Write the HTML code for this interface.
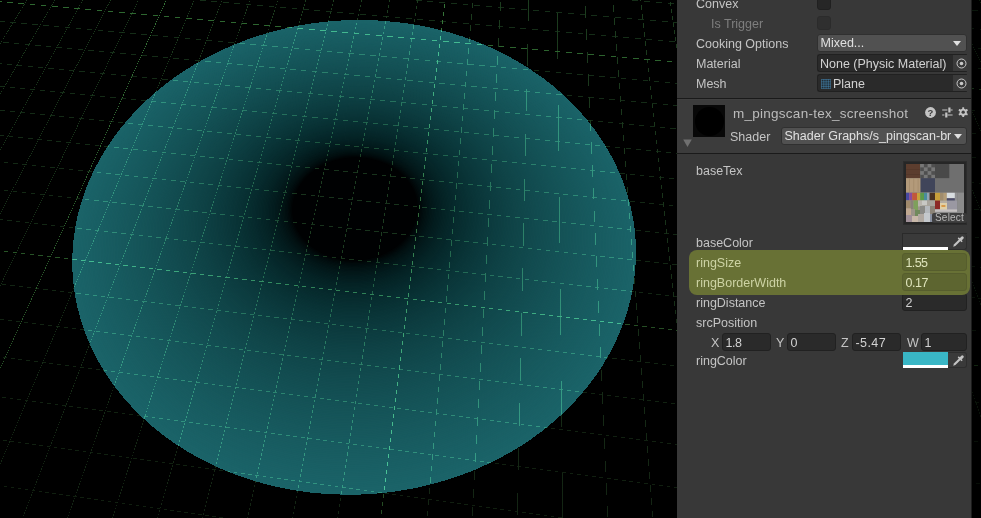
<!DOCTYPE html>
<html><head><meta charset="utf-8"><title>Inspector</title>
<style>
html,body{margin:0;padding:0;background:#000;}
body{width:981px;height:518px;overflow:hidden;position:relative;font-family:"Liberation Sans",sans-serif;font-size:12.5px;color:#c4c4c4;}
#scene{position:absolute;left:0;top:0;width:981px;height:518px;}
#panel{transform:translateZ(0);will-change:transform;position:absolute;left:677px;top:0;width:294px;height:518px;background:#383838;overflow:hidden;box-shadow:1px 0 0 #1d1d1d;}
.hdrbg{position:absolute;left:0;top:99px;width:295px;height:54px;background:#3c3c3c;}
.sep{position:absolute;left:0;width:295px;height:1px;background:#1a1a1a;}
.lbl{position:absolute;left:19px;height:17px;line-height:17px;white-space:nowrap;color:#c4c4c4;z-index:2;}
.lbl.dim{color:#7e7e7e;}
.lbl.hlt{color:#cdd3a4;}
.chk{position:absolute;left:140px;width:12px;height:12px;background:#262626;border:1px solid #202020;border-radius:3px;}
.chk.dis{background:#2f2f2f;border-color:#2b2b2b;}
.dd{position:absolute;box-sizing:border-box;background:#515151;border:1px solid #303030;border-radius:3px;color:#e0e0e0;}
.dd span{position:absolute;left:2.5px;top:0px;height:16px;line-height:16px;white-space:nowrap;}
.arr{position:absolute;right:5px;top:6px;width:0;height:0;border-left:4px solid transparent;border-right:4px solid transparent;border-top:5px solid #e0e0e0;}
.obj{position:absolute;left:140px;width:150px;height:18px;box-sizing:border-box;background:#2a2a2a;border:1px solid #212121;border-right:none;border-radius:3px 1px 1px 3px;color:#d2d2d2;overflow:hidden;}
.obj span{position:absolute;left:2px;top:1px;height:16px;line-height:16px;white-space:nowrap;}
.obj .mesh{position:absolute;left:2.5px;top:3.8px;}
.obj .pick{position:absolute;right:0;top:0;width:14px;height:16px;background:#3a3a3a;}
.obj .pick svg{position:absolute;left:2.5px;top:2.5px;}
.thumb{position:absolute;left:16px;top:105px;width:32px;height:32px;background:#080808;}
.thumb div{position:absolute;left:1.5px;top:1.5px;width:29px;height:29px;border-radius:50%;background:#000;}
.fold{position:absolute;left:6.3px;top:139px;}
.title{position:absolute;left:56px;top:105px;height:18px;line-height:18px;font-size:13.5px;letter-spacing:0.26px;color:#bcbcbc;white-space:nowrap;}
.ico{position:absolute;}
.tex{position:absolute;left:226px;top:161px;width:64px;height:64px;box-sizing:border-box;background:#262626;border:1px solid #2c2c2c;}
.tex>svg{position:absolute;left:2px;top:2px;}
.sel{position:absolute;right:-1px;bottom:1px;width:35px;height:10px;line-height:10px;font-size:10px;letter-spacing:0.2px;text-align:center;background:rgba(58,58,58,0.92);color:#b8b8b8;border-radius:2px;}
.col{position:absolute;left:225px;width:65px;height:16px;}
.col .sw{position:absolute;left:1px;top:0;width:45px;height:13px;}
.col .al{position:absolute;left:1px;top:13px;width:45px;height:3px;background:#fff;}
.col .eye{position:absolute;left:46px;top:0;width:19px;height:16px;box-sizing:border-box;background:#3a3a3a;border:1px solid #2d2d2d;border-left:none;border-radius:0 3px 3px 0;}
.col .eye svg{position:absolute;left:5px;top:2px;}
.col.bc{border-top:1px solid #2a2a2a;border-left:1px solid #2a2a2a;width:64px}
.col.bc .sw,.col.bc .al{left:0}
.col.bc .eye{left:45px;border-top:none}
.hl{position:absolute;left:12px;top:250px;width:281px;height:45px;background:#687135;border-radius:8px;z-index:1;}
.fld{position:absolute;height:18px;box-sizing:border-box;background:#2a2a2a;border:1px solid #212121;border-radius:3px;color:#d2d2d2;z-index:2;}
.fld span{position:absolute;left:2.5px;top:1.5px;height:15px;line-height:15px;white-space:nowrap;}
.fld.hlf{background:#5d6530;border-color:#565d2d;color:#dfe4bc;}

</style></head>
<body>
<svg id="scene" width="981" height="518" viewBox="0 0 981 518">
<rect width="981" height="518" fill="#000"/>
<defs>
<linearGradient id="g_amin" gradientUnits="userSpaceOnUse" x1="0" y1="0" x2="0" y2="518"><stop offset="0" stop-color="#152e18"/><stop offset="1" stop-color="#101e0f"/></linearGradient>
<linearGradient id="g_bmin" gradientUnits="userSpaceOnUse" x1="0" y1="0" x2="0" y2="518"><stop offset="0" stop-color="#1c3c1e"/><stop offset="1" stop-color="#132413"/></linearGradient>
<linearGradient id="g_amaj" gradientUnits="userSpaceOnUse" x1="0" y1="0" x2="0" y2="518"><stop offset="0" stop-color="#2e6830"/><stop offset="1" stop-color="#203e1c"/></linearGradient>
<linearGradient id="g_bmaj" gradientUnits="userSpaceOnUse" x1="0" y1="0" x2="0" y2="518"><stop offset="0" stop-color="#367438"/><stop offset="1" stop-color="#244a22"/></linearGradient>
<path id="pa0" transform="translate(0 .5)" d="M849 0h6M861 1h6M873 2h7M886 3h6M898 4h6M910 5h6M923 6h6M935 7h6M947 8h6M959 9h6M972 10h6M632 0h6M644 1h6M656 2h6M668 3h6M680 4h6M692 5h6M704 6h6M716 7h6M728 8h6M740 9h6M752 10h6M764 11h6M776 12h6M788 13h6M800 14h6M812 15h6M824 16h6M836 17h6M848 18h6M860 19h6M872 20h6M884 21h6M896 22h6M908 23h6M920 24h6M932 25h6M944 26h6M956 27h6M968 28h6M980 29h1M416 0h6M427 1h6M439 2h6M451 3h6M463 4h5M474 5h6M486 6h6M498 7h6M509 8h6M521 9h6M533 10h6M545 11h5M556 12h6M568 13h6M580 14h6M591 15h6M603 16h6M615 17h6M627 18h5M638 19h6M650 20h6M662 21h6M673 22h6M685 23h6M697 24h6M709 25h5M720 26h6M732 27h6M744 28h6M755 29h6M767 30h6M779 31h6M791 32h5M802 33h6M814 34h6M826 35h6M837 36h6M849 37h6M861 38h6M873 39h5M884 40h6M896 41h6M908 42h6M919 43h6M931 44h6M943 45h6M955 46h5M966 47h6M978 48h3M200 0h6M211 1h6M223 2h6M234 3h6M246 4h5M257 5h6M269 6h5M280 7h6M292 8h5M303 9h6M314 10h6M326 11h6M337 12h6M349 13h5M360 14h6M372 15h5M383 16h6M395 17h5M406 18h6M417 19h6M429 20h6M440 21h6M452 22h5M463 23h6M475 24h5M486 25h6M498 26h5M509 27h6M520 28h6M532 29h6M543 30h6M555 31h5M566 32h6M578 33h5M589 34h6M601 35h5M612 36h6M623 37h6M635 38h6M646 39h6M658 40h5M669 41h6M681 42h5M692 43h6M704 44h5M715 45h6M726 46h6M738 47h6M749 48h6M761 49h5M772 50h6M784 51h5M795 52h6M807 53h5M818 54h6M829 55h6M841 56h6M852 57h6M864 58h5M875 59h6M887 60h5M898 61h6M910 62h5M921 63h6M932 64h6M944 65h6M955 66h6M967 67h5M978 68h3M0 21h5M10 22h6M21 23h6M32 24h6M43 25h6M54 26h5M65 27h5M76 28h5M87 29h5M98 30h5M108 31h6M119 32h6M130 33h6M141 34h6M152 35h6M163 36h5M174 37h5M185 38h5M196 39h5M207 40h5M218 41h5M228 42h6M239 43h6M250 44h6M261 45h6M272 46h6M283 47h5M294 48h5M305 49h5M316 50h5M327 51h5M337 52h6M348 53h6M359 54h6M370 55h6M381 56h6M392 57h5M403 58h5M414 59h5M425 60h5M436 61h5M447 62h5M457 63h6M468 64h6M479 65h6M490 66h6M501 67h5M512 68h5M523 69h5M534 70h5M545 71h5M556 72h5M566 73h6M577 74h6M588 75h6M599 76h6M610 77h6M621 78h5M632 79h5M643 80h5M654 81h5M665 82h5M675 83h6M686 84h6M697 85h6M708 86h6M719 87h6M730 88h5M741 89h5M752 90h5M763 91h5M774 92h5M785 93h5M795 94h6M806 95h6M817 96h6M828 97h6M839 98h6M850 99h5M861 100h5M872 101h5M883 102h5M894 103h5M904 104h6M915 105h6M926 106h6M937 107h6M948 108h6M959 109h5M970 110h5M3 42h6M14 43h5M25 44h5M35 45h6M46 46h5M57 47h5M67 48h5M78 49h5M88 50h6M99 51h5M110 52h5M120 53h6M131 54h5M142 55h5M152 56h6M163 57h5M173 58h6M184 59h5M195 60h5M205 61h6M216 62h5M227 63h5M237 64h6M248 65h5M259 66h5M269 67h6M280 68h5M290 69h6M301 70h5M312 71h5M322 72h6M333 73h5M344 74h5M354 75h6M365 76h5M376 77h5M386 78h5M397 79h5M407 80h6M418 81h5M429 82h5M439 83h6M450 84h5M461 85h5M471 86h6M482 87h5M493 88h5M503 89h5M514 90h5M524 91h6M535 92h5M546 93h5M556 94h6M567 95h5M578 96h5M588 97h6M599 98h5M609 99h6M620 100h5M631 101h5M641 102h6M652 103h5M663 104h5M673 105h6M684 106h5M695 107h5M705 108h6M716 109h5M726 110h6M737 111h5M748 112h5M758 113h6M769 114h5M780 115h5M790 116h6M801 117h5M812 118h5M822 119h6M833 120h5M843 121h6M854 122h5M865 123h5M875 124h6M886 125h5M897 126h5M907 127h6M918 128h5M929 129h5M939 130h5M950 131h5M960 132h6M971 133h5M0 63h2M7 64h5M17 65h5M28 66h5M38 67h5M48 68h6M59 69h5M69 70h5M79 71h6M90 72h5M100 73h5M111 74h5M121 75h5M131 76h6M142 77h5M152 78h5M162 79h6M173 80h5M183 81h5M194 82h5M204 83h5M214 84h5M225 85h5M235 86h5M245 87h6M256 88h5M266 89h5M276 90h6M287 91h5M297 92h5M308 93h5M318 94h5M328 95h5M339 96h5M349 97h5M359 98h6M370 99h5M380 100h5M390 101h6M401 102h5M411 103h5M422 104h5M432 105h5M442 106h5M453 107h5M463 108h5M473 109h6M484 110h5M494 111h5M505 112h5M515 113h5M525 114h5M536 115h5M546 116h5M556 117h6M567 118h5M577 119h5M587 120h6M598 121h5M608 122h5M619 123h5M629 124h5M639 125h5M650 126h5M660 127h5M670 128h6M681 129h5M691 130h5M701 131h6M712 132h5M722 133h5M733 134h5M743 135h5M753 136h5M764 137h5M774 138h5M784 139h6M795 140h5M805 141h5M815 142h6M826 143h5M836 144h5M847 145h5M857 146h5M867 147h6M878 148h5M888 149h5M898 150h6M909 151h5M919 152h5M930 153h5M940 154h5M950 155h5M961 156h5M971 157h5M0 86h4M10 87h5M20 88h5M30 89h5M40 90h5M50 91h5M60 92h5M70 93h5M80 94h5M90 95h5M100 96h5M110 97h6M121 98h5M131 99h5M141 100h5M151 101h5M161 102h5M171 103h5M181 104h5M191 105h5M201 106h5M211 107h6M222 108h5M232 109h5M242 110h5M252 111h5M262 112h5M272 113h5M282 114h5M292 115h5M302 116h5M312 117h6M323 118h5M333 119h5M343 120h5M353 121h5M363 122h5M373 123h5M383 124h5M393 125h5M403 126h5M413 127h5M424 128h5M434 129h5M444 130h5M454 131h5M464 132h5M474 133h5M484 134h5M494 135h5M504 136h5M514 137h5M525 138h5M535 139h5M545 140h5M555 141h5M565 142h5M575 143h5M585 144h5M595 145h5M605 146h5M615 147h5M626 148h5M636 149h5M646 150h5M656 151h5M666 152h5M676 153h5M686 154h5M696 155h5M706 156h5M716 157h5M727 158h5M737 159h5M747 160h5M757 161h5M767 162h5M777 163h5M787 164h5M797 165h5M807 166h5M817 167h5M827 168h6M838 169h5M848 170h5M858 171h5M868 172h5M878 173h5M888 174h5M898 175h5M908 176h5M918 177h5M928 178h6M939 179h5M949 180h5M959 181h5M969 182h5M979 183h2M0 110h5M10 111h5M20 112h5M30 113h5M40 114h5M50 115h5M59 116h5M69 117h5M79 118h5M89 119h5M99 120h5M109 121h5M118 122h5M128 123h5M138 124h5M148 125h5M158 126h5M168 127h5M177 128h5M187 129h5M197 130h5M207 131h5M217 132h5M227 133h5M236 134h5M246 135h5M256 136h5M266 137h5M276 138h5M286 139h5M295 140h5M305 141h5M315 142h5M325 143h5M335 144h5M345 145h5M354 146h5M364 147h5M374 148h5M384 149h5M394 150h5M404 151h4M413 152h5M423 153h5M433 154h5M443 155h5M453 156h5M463 157h4M472 158h5M482 159h5M492 160h5M502 161h5M512 162h5M522 163h4M531 164h5M541 165h5M551 166h5M561 167h5M571 168h5M581 169h4M590 170h5M600 171h5M610 172h5M620 173h5M630 174h5M640 175h4M649 176h5M659 177h5M669 178h5M679 179h5M689 180h5M699 181h4M708 182h5M718 183h5M728 184h5M738 185h5M748 186h5M758 187h4M767 188h5M777 189h5M787 190h5M797 191h5M807 192h5M817 193h4M826 194h5M836 195h5M846 196h5M856 197h5M866 198h5M875 199h5M885 200h5M895 201h5M905 202h5M915 203h5M925 204h5M934 205h5M944 206h5M954 207h5M964 208h5M974 209h5M0 135h4M9 136h4M18 137h5M28 138h5M37 139h5M47 140h5M56 141h5M66 142h5M76 143h4M85 144h5M95 145h4M104 146h5M114 147h5M123 148h5M133 149h5M143 150h4M152 151h5M162 152h4M171 153h5M181 154h5M190 155h5M200 156h5M209 157h5M219 158h5M229 159h4M238 160h5M248 161h5M257 162h5M267 163h5M276 164h5M286 165h5M296 166h4M305 167h5M315 168h4M324 169h5M334 170h5M343 171h5M353 172h5M363 173h4M372 174h5M382 175h4M391 176h5M401 177h5M410 178h5M420 179h5M429 180h5M439 181h5M449 182h4M458 183h5M468 184h5M477 185h5M487 186h5M496 187h5M506 188h5M516 189h4M525 190h5M535 191h4M544 192h5M554 193h5M563 194h5M573 195h5M583 196h4M592 197h5M602 198h4M611 199h5M621 200h5M630 201h5M640 202h5M649 203h5M659 204h5M669 205h4M678 206h5M688 207h5M697 208h5M707 209h5M716 210h5M726 211h5M736 212h4M745 213h5M755 214h4M764 215h5M774 216h5M783 217h5M793 218h5M803 219h4M812 220h5M822 221h4M831 222h5M841 223h5M850 224h5M860 225h5M869 226h5M879 227h5M889 228h4M898 229h5M908 230h5M917 231h5M927 232h5M936 233h5M946 234h5M956 235h4M965 236h5M975 237h4M4 162h4M13 163h5M22 164h5M32 165h4M41 166h4M50 167h5M59 168h5M69 169h4M78 170h5M87 171h5M97 172h4M106 173h5M115 174h5M125 175h4M134 176h4M143 177h5M152 178h5M162 179h4M171 180h5M180 181h5M190 182h4M199 183h5M208 184h5M218 185h4M227 186h4M236 187h5M245 188h5M255 189h4M264 190h5M273 191h5M283 192h4M292 193h5M301 194h5M311 195h4M320 196h4M329 197h5M338 198h5M348 199h4M357 200h5M366 201h5M376 202h4M385 203h5M394 204h5M404 205h4M413 206h4M422 207h5M431 208h5M441 209h4M450 210h5M459 211h5M469 212h4M478 213h5M487 214h5M497 215h4M506 216h4M515 217h5M524 218h5M534 219h4M543 220h5M552 221h5M562 222h4M571 223h5M580 224h5M590 225h4M599 226h4M608 227h5M617 228h5M627 229h4M636 230h5M645 231h5M655 232h4M664 233h5M673 234h5M683 235h4M692 236h4M701 237h5M710 238h5M720 239h4M729 240h5M738 241h5M748 242h4M757 243h5M766 244h5M776 245h4M785 246h4M794 247h5M803 248h5M813 249h4M822 250h5M831 251h5M841 252h4M850 253h5M859 254h5M869 255h4M878 256h4M887 257h5M896 258h5M906 259h4M915 260h5M924 261h5M934 262h4M943 263h5M952 264h5M962 265h4M971 266h4M980 267h1M4 190h4M13 191h4M22 192h4M31 193h4M40 194h4M49 195h4M58 196h4M67 197h4M76 198h4M85 199h4M94 200h5M103 201h5M112 202h5M121 203h5M130 204h5M139 205h5M148 206h5M157 207h5M166 208h5M175 209h5M184 210h5M193 211h5M202 212h5M211 213h5M220 214h5M230 215h4M239 216h4M248 217h4M257 218h4M266 219h4M275 220h4M284 221h4M293 222h4M302 223h4M311 224h4M320 225h4M329 226h4M338 227h4M347 228h5M356 229h5M365 230h5M374 231h5M383 232h5M392 233h5M401 234h5M410 235h5M419 236h5M428 237h5M437 238h5M446 239h5M455 240h5M464 241h5M473 242h5M483 243h4M492 244h4M501 245h4M510 246h4M519 247h4M528 248h4M537 249h4M546 250h4M555 251h4M564 252h4M573 253h4M582 254h4M591 255h4M600 256h5M609 257h5M618 258h5M627 259h5M636 260h5M645 261h5M654 262h5M663 263h5M672 264h5M681 265h5M690 266h5M699 267h5M708 268h5M717 269h5M726 270h5M736 271h4M745 272h4M754 273h4M763 274h4M772 275h4M781 276h4M790 277h4M799 278h4M808 279h4M817 280h4M826 281h4M835 282h4M844 283h4M853 284h5M862 285h5M871 286h5M880 287h5M889 288h5M898 289h5M907 290h5M916 291h5M925 292h5M934 293h5M943 294h5M952 295h5M961 296h5M970 297h5M979 298h2M0 219h3M7 220h5M16 221h4M25 222h4M34 223h4M42 224h5M51 225h4M60 226h4M69 227h4M77 228h5M86 229h5M95 230h4M104 231h4M112 232h5M121 233h5M130 234h4M139 235h4M148 236h4M156 237h5M165 238h4M174 239h4M183 240h4M191 241h5M200 242h5M209 243h4M218 244h4M226 245h5M235 246h5M244 247h4M253 248h4M262 249h4M270 250h5M279 251h5M288 252h4M297 253h4M305 254h5M314 255h5M323 256h4M332 257h4M341 258h4M349 259h5M358 260h4M367 261h4M376 262h4M384 263h5M393 264h5M402 265h4M411 266h4M419 267h5M428 268h5M437 269h4M446 270h4M455 271h4M463 272h5M472 273h4M481 274h4M490 275h4M498 276h5M507 277h5M516 278h4M525 279h4M534 280h4M542 281h5M551 282h4M560 283h4M569 284h4M577 285h5M586 286h5M595 287h4M604 288h4M612 289h5M621 290h5M630 291h4M639 292h4M648 293h4M656 294h5M665 295h4M674 296h4M683 297h4M691 298h5M700 299h5M709 300h4M718 301h4M726 302h5M735 303h5M744 304h4M753 305h4M762 306h4M770 307h5M779 308h5M788 309h4M797 310h4M805 311h5M814 312h5M823 313h4M832 314h4M841 315h4M849 316h5M858 317h4M867 318h4M876 319h4M884 320h5M893 321h5M902 322h4M911 323h4M919 324h5M928 325h5M937 326h4M946 327h4M955 328h4M963 329h5M972 330h4M2 284h4M10 285h5M19 286h4M27 287h4M35 288h4M43 289h5M52 290h4M60 291h4M68 292h4M76 293h5M85 294h4M93 295h4M101 296h4M109 297h5M118 298h4M126 299h4M134 300h4M142 301h5M151 302h4M159 303h4M167 304h4M175 305h5M184 306h4M192 307h4M200 308h4M208 309h5M217 310h4M225 311h4M233 312h4M241 313h5M250 314h4M258 315h4M266 316h4M274 317h5M283 318h4M291 319h4M299 320h4M307 321h4M316 322h4M324 323h4M332 324h4M340 325h4M349 326h4M357 327h4M365 328h4M373 329h4M382 330h4M390 331h4M398 332h4M406 333h4M415 334h4M423 335h4M431 336h4M439 337h4M448 338h4M456 339h4M464 340h4M472 341h4M481 342h4M489 343h4M497 344h4M505 345h4M514 346h4M522 347h4M530 348h4M538 349h4M547 350h4M555 351h4M563 352h4M571 353h4M580 354h4M588 355h4M596 356h4M604 357h4M612 358h5M621 359h4M629 360h4M637 361h4M645 362h5M654 363h4M662 364h4M670 365h4M678 366h5M687 367h4M695 368h4M703 369h4M711 370h5M720 371h4M728 372h4M736 373h4M744 374h5M753 375h4M761 376h4M769 377h4M777 378h5M786 379h4M794 380h4M802 381h4M810 382h5M819 383h4M827 384h4M835 385h4M843 386h5M852 387h4M860 388h4M868 389h4M876 390h5M885 391h4M893 392h4M901 393h4M909 394h4M918 395h4M926 396h4M934 397h4M942 398h4M951 399h4M959 400h4M967 401h4M975 402h4M0 319h4M8 320h4M16 321h4M24 322h4M32 323h4M40 324h4M48 325h4M56 326h4M64 327h4M72 328h4M80 329h4M88 330h4M96 331h4M104 332h4M112 333h4M120 334h4M128 335h4M136 336h4M144 337h3M151 338h4M159 339h4M167 340h4M175 341h4M183 342h4M191 343h4M199 344h4M207 345h4M215 346h4M223 347h4M231 348h4M239 349h4M247 350h4M255 351h4M263 352h4M271 353h4M279 354h4M287 355h4M295 356h4M303 357h4M311 358h4M319 359h4M327 360h4M335 361h4M343 362h4M351 363h4M359 364h4M367 365h4M375 366h4M383 367h4M391 368h4M399 369h4M407 370h4M415 371h4M423 372h4M431 373h4M439 374h4M447 375h4M455 376h4M463 377h4M471 378h4M479 379h4M487 380h4M495 381h4M503 382h4M511 383h4M519 384h4M527 385h4M535 386h4M543 387h4M551 388h4M559 389h4M567 390h4M575 391h4M583 392h4M591 393h4M599 394h4M607 395h4M615 396h4M623 397h4M631 398h4M639 399h4M647 400h4M655 401h4M663 402h4M671 403h4M679 404h4M686 405h4M694 406h4M702 407h4M710 408h4M718 409h4M726 410h4M734 411h4M742 412h4M750 413h4M758 414h4M766 415h4M774 416h4M782 417h4M790 418h4M798 419h4M806 420h4M814 421h4M822 422h4M830 423h4M838 424h4M846 425h4M854 426h4M862 427h4M870 428h4M878 429h4M886 430h4M894 431h4M902 432h4M910 433h4M918 434h4M926 435h4M934 436h4M942 437h4M950 438h4M958 439h4M966 440h4M974 441h4M3 357h4M11 358h4M18 359h4M26 360h4M34 361h4M42 362h4M49 363h4M57 364h4M65 365h4M73 366h3M80 367h4M88 368h4M96 369h4M103 370h4M111 371h4M119 372h4M127 373h3M134 374h4M142 375h4M150 376h4M158 377h3M165 378h4M173 379h4M181 380h4M188 381h4M196 382h4M204 383h4M212 384h3M219 385h4M227 386h4M235 387h4M242 388h4M250 389h4M258 390h4M266 391h4M273 392h4M281 393h4M289 394h4M297 395h3M304 396h4M312 397h4M320 398h4M327 399h4M335 400h4M343 401h4M351 402h3M358 403h4M366 404h4M374 405h4M382 406h3M389 407h4M397 408h4M405 409h4M412 410h4M420 411h4M428 412h4M436 413h3M443 414h4M451 415h4M459 416h4M466 417h4M474 418h4M482 419h4M490 420h4M497 421h4M505 422h4M513 423h4M521 424h3M528 425h4M536 426h4M544 427h4M551 428h4M559 429h4M567 430h4M575 431h3M582 432h4M590 433h4M598 434h4M606 435h3M613 436h4M621 437h4M629 438h4M636 439h4M644 440h4M652 441h4M660 442h3M667 443h4M675 444h4M683 445h4M691 446h3M698 447h4M706 448h4M714 449h4M721 450h4M729 451h4M737 452h4M745 453h3M752 454h4M760 455h4M768 456h4M775 457h4M783 458h4M791 459h4M799 460h4M806 461h4M814 462h4M822 463h4M830 464h3M837 465h4M845 466h4M853 467h4M860 468h4M868 469h4M876 470h4M884 471h3M891 472h4M899 473h4M907 474h4M915 475h3M922 476h4M930 477h4M938 478h4M945 479h4M953 480h4M961 481h4M969 482h3M976 483h4M2 397h4M10 398h3M17 399h4M25 400h3M32 401h4M40 402h3M47 403h4M55 404h3M62 405h4M69 406h4M77 407h4M84 408h4M92 409h4M99 410h4M107 411h4M114 412h4M122 413h3M129 414h4M137 415h3M144 416h4M152 417h3M159 418h4M167 419h3M174 420h4M181 421h4M189 422h4M196 423h4M204 424h4M211 425h4M219 426h3M226 427h4M234 428h3M241 429h4M249 430h3M256 431h4M264 432h3M271 433h4M278 434h4M286 435h4M293 436h4M301 437h4M308 438h4M316 439h4M323 440h4M331 441h3M338 442h4M346 443h3M353 444h4M361 445h3M368 446h4M376 447h3M383 448h4M390 449h4M398 450h4M405 451h4M413 452h4M420 453h4M428 454h3M435 455h4M443 456h3M450 457h4M458 458h3M465 459h4M473 460h3M480 461h4M487 462h4M495 463h4M502 464h4M510 465h4M517 466h4M525 467h4M532 468h4M540 469h3M547 470h4M555 471h3M562 472h4M570 473h3M577 474h4M585 475h3M592 476h4M599 477h4M607 478h4M614 479h4M622 480h4M629 481h4M637 482h3M644 483h4M652 484h3M659 485h4M667 486h3M674 487h4M682 488h3M689 489h4M696 490h4M704 491h4M711 492h4M719 493h4M726 494h4M734 495h4M741 496h4M749 497h3M756 498h4M764 499h3M771 500h4M779 501h3M786 502h4M794 503h3M801 504h4M808 505h4M816 506h4M823 507h4M831 508h4M838 509h4M846 510h4M853 511h4M861 512h3M868 513h4M876 514h3M883 515h4M891 516h3M898 517h4M3 440h4M10 441h4M18 442h3M25 443h4M32 444h4M39 445h4M47 446h3M54 447h3M61 448h4M68 449h4M75 450h4M83 451h3M90 452h3M97 453h4M104 454h4M111 455h4M119 456h3M126 457h3M133 458h4M140 459h4M147 460h4M155 461h3M162 462h3M169 463h4M176 464h4M183 465h4M191 466h3M198 467h3M205 468h4M212 469h4M219 470h4M227 471h3M234 472h3M241 473h4M248 474h4M255 475h4M263 476h3M270 477h3M277 478h4M284 479h4M291 480h4M299 481h3M306 482h4M313 483h4M320 484h4M328 485h3M335 486h3M342 487h4M349 488h4M356 489h4M364 490h3M371 491h3M378 492h4M385 493h4M392 494h4M400 495h3M407 496h3M414 497h4M421 498h4M428 499h4M436 500h3M443 501h3M450 502h4M457 503h4M464 504h4M472 505h3M479 506h3M486 507h4M493 508h4M500 509h4M508 510h3M515 511h3M522 512h4M529 513h4M536 514h4M544 515h3M551 516h3M558 517h4M4 486h3M11 487h3M18 488h3M25 489h3M32 490h3M39 491h3M45 492h4M52 493h4M59 494h4M66 495h4M73 496h4M80 497h4M87 498h4M94 499h4M101 500h3M108 501h3M115 502h3M122 503h3M129 504h3M136 505h3M143 506h3M150 507h3M157 508h3M164 509h3M170 510h4M177 511h4M184 512h4M191 513h4M198 514h4M205 515h4M212 516h4M219 517h4"/>
<path id="pb0" transform="translate(.5 0)" d="M26 0v1M25 2v1M24 4v1M23 5v1M22 7v1M20 10v1M19 12v1M18 13v1M17 15v1M16 17v1M15 18v1M14 20v1M12 23v1M11 25v1M10 26v1M9 28v1M8 30v1M7 31v1M6 33v1M4 36v1M3 38v1M1 41v1M0 43v1M54 0v1M53 2v1M52 4v1M51 5v1M50 7v1M49 9v1M47 12v1M46 14v1M45 16v1M44 17v1M43 19v1M42 21v1M40 24v1M39 26v1M38 28v1M37 29v1M36 31v1M35 33v1M33 36v1M32 38v1M31 40v1M30 41v1M29 43v1M28 45v1M26 48v1M25 50v1M24 52v1M23 53v1M22 55v1M21 57v1M19 60v1M18 62v1M17 64v1M16 65v1M15 67v1M14 69v1M13 71v1M12 72v1M11 74v1M10 76v1M8 79v1M7 81v1M6 83v1M5 84v1M4 86v1M3 88v1M1 91v1M0 93v1M82 0v1M81 2v1M79 5v1M78 7v1M77 9v1M76 11v1M75 13v1M73 16v1M72 18v1M71 20v1M70 22v1M69 24v1M68 25v1M67 27v1M66 29v1M65 31v1M64 33v1M62 36v1M61 38v1M60 40v1M59 42v1M58 44v1M57 45v1M56 47v1M55 49v1M54 51v1M53 53v1M51 56v1M50 58v1M49 60v1M48 62v1M47 64v1M46 65v1M45 67v1M44 69v1M43 71v1M42 73v1M40 76v1M39 78v1M38 80v1M37 82v1M36 84v1M34 87v1M33 89v1M32 91v1M31 93v1M30 95v1M29 96v1M28 98v1M27 100v1M26 102v1M25 104v1M23 107v1M22 109v1M21 111v1M20 113v1M19 115v1M18 116v1M17 118v1M16 120v1M15 122v1M14 124v1M12 127v1M11 129v1M10 131v1M9 133v1M8 135v1M7 136v1M6 138v1M5 140v1M4 142v1M3 144v1M1 147v1M0 149v1M110 0v1M109 2v1M108 4v1M107 5v1M106 7v1M105 9v1M104 11v1M103 13v1M102 15v1M101 17v1M100 19v1M99 21v1M98 23v1M97 25v1M96 27v1M95 29v1M94 31v1M93 33v1M91 36v1M90 38v1M89 40v1M88 42v1M87 44v1M86 46v1M85 48v1M84 50v1M83 52v1M82 54v1M81 56v1M80 58v1M79 60v1M78 62v1M77 64v1M76 65v1M75 67v1M74 69v1M73 71v1M72 73v1M71 75v1M70 77v1M69 79v1M68 81v1M67 83v1M66 85v1M65 87v1M64 89v1M63 91v1M62 93v1M61 95v1M60 96v1M59 98v1M58 100v1M57 102v1M56 104v1M55 106v1M54 108v1M53 110v1M52 112v1M51 114v1M50 116v1M49 118v1M48 120v1M47 122v1M46 124v1M44 127v1M43 129v1M42 131v1M41 133v1M40 135v1M39 137v1M38 139v1M37 141v1M36 143v1M35 145v1M34 147v1M33 149v1M32 151v1M31 153v1M30 155v1M29 156v1M28 158v1M27 160v1M26 162v1M25 164v1M24 166v1M23 168v1M22 170v1M21 172v1M20 174v1M19 176v1M18 178v1M17 180v1M16 182v1M15 184v1M13 187v1M12 189v1M11 191v1M10 193v1M9 195v1M8 197v1M7 199v1M6 201v1M5 203v1M4 205v1M3 207v1M2 209v1M1 211v1M0 213v1M137 1v1M136 4v1M135 6v1M134 8v1M133 10v1M132 12v1M131 14v1M130 16v1M129 18v1M128 20v1M127 22v1M126 24v1M125 26v1M124 28v1M123 30v1M122 32v1M121 35v1M120 37v1M119 39v1M118 41v1M117 43v1M116 45v1M115 47v1M114 49v1M113 51v1M112 53v1M111 55v1M110 57v1M109 59v1M108 61v1M107 63v1M106 66v1M105 68v1M104 70v1M103 72v1M102 74v1M101 76v1M100 78v1M99 80v1M98 82v1M97 84v1M96 86v1M95 88v1M94 90v1M93 92v1M92 94v2M91 97v1M90 99v1M89 101v1M88 103v1M87 105v1M86 107v1M85 109v1M84 111v1M83 113v1M82 115v1M81 117v1M80 119v1M79 121v1M78 123v1M77 125v2M76 128v1M75 130v1M74 132v1M73 134v1M72 136v1M71 138v1M70 140v1M69 142v1M68 144v1M67 146v1M66 148v1M65 150v1M64 152v1M63 154v1M62 156v2M61 159v1M60 161v1M59 163v1M58 165v1M57 167v1M56 169v1M55 171v1M54 173v1M53 175v1M52 177v1M51 179v1M50 181v1M49 183v1M48 185v1M47 188v1M46 190v1M45 192v1M44 194v1M43 196v1M42 198v1M41 200v1M40 202v1M39 204v1M38 206v1M37 208v1M36 210v1M35 212v1M34 214v1M33 216v1M32 219v1M31 221v1M30 223v1M29 225v1M28 227v1M27 229v1M26 231v1M25 233v1M24 235v1M23 237v1M22 239v1M21 241v1M20 243v1M19 245v1M18 247v2M17 250v1M16 252v1M15 254v1M14 256v1M13 258v1M12 260v1M11 262v1M10 264v1M9 266v1M8 268v1M7 270v1M6 272v1M5 274v1M4 276v1M3 278v2M2 281v1M1 283v1M0 285v1M193 1v1M192 3v2M191 6v1M190 8v1M189 11v1M188 13v1M187 15v2M186 18v1M185 20v1M184 23v1M183 25v1M182 27v2M181 30v1M180 32v1M179 35v1M178 37v1M177 39v2M176 42v1M175 44v1M174 47v1M173 49v1M172 51v2M171 54v1M170 56v1M169 59v1M168 61v1M167 63v1M166 66v1M165 68v1M164 70v2M163 73v1M162 75v1M161 78v1M160 80v1M159 82v2M158 85v1M157 87v1M156 90v1M155 92v1M154 94v2M153 97v1M152 99v1M151 102v1M150 104v1M149 106v2M148 109v1M147 111v1M146 114v1M145 116v1M144 118v2M143 121v1M142 123v1M141 126v1M140 128v1M139 130v1M138 133v1M137 135v1M136 137v2M135 140v1M134 142v1M133 145v1M132 147v1M131 149v2M130 152v1M129 154v1M128 157v1M127 159v1M126 161v2M125 164v1M124 166v1M123 169v1M122 171v1M121 173v2M120 176v1M119 178v1M118 181v1M117 183v1M116 185v2M115 188v1M114 190v1M113 192v2M112 195v1M111 197v1M110 200v1M109 202v1M108 204v2M107 207v1M106 209v1M105 212v1M104 214v1M103 216v2M102 219v1M101 221v1M100 224v1M99 226v1M98 228v2M97 231v1M96 233v1M95 236v1M94 238v1M93 240v2M92 243v1M91 245v1M90 248v1M89 250v1M88 252v2M87 255v1M86 257v1M85 259v2M84 262v1M83 264v1M82 267v1M81 269v1M80 271v2M79 274v1M78 276v1M77 279v1M76 281v1M75 283v2M74 286v1M73 288v1M72 291v1M71 293v1M70 295v2M69 298v1M68 300v1M67 303v1M66 305v1M65 307v2M64 310v1M63 312v1M62 315v1M61 317v1M60 319v2M59 322v1M58 324v1M57 326v2M56 329v1M55 331v1M54 334v1M53 336v1M52 338v2M51 341v1M50 343v1M49 346v1M48 348v1M47 350v2M46 353v1M45 355v1M44 358v1M43 360v1M42 362v2M41 365v1M40 367v1M39 370v1M38 372v1M37 374v2M36 377v1M35 379v1M34 382v1M33 384v1M32 386v1M31 389v1M30 391v1M29 393v2M28 396v1M27 398v1M26 401v1M25 403v1M24 405v2M23 408v1M22 410v1M21 413v1M20 415v1M19 417v2M18 420v1M17 422v1M16 425v1M15 427v1M14 429v2M13 432v1M12 434v1M11 437v1M10 439v1M9 441v2M8 444v1M7 446v1M6 449v1M5 451v1M4 453v1M3 456v1M2 458v1M1 460v2M0 463v1M221 1v1M220 4v1M219 6v1M218 9v1M217 11v2M216 14v1M215 17v1M214 19v1M213 22v1M212 24v2M211 27v1M210 29v2M209 32v1M208 35v1M207 37v2M206 40v1M205 42v2M204 45v1M203 48v1M202 50v2M201 53v1M200 55v2M199 58v1M198 61v1M197 63v2M196 66v1M195 68v2M194 71v1M193 74v1M192 76v2M191 79v1M190 81v2M189 84v1M188 87v1M187 89v2M186 92v1M185 94v2M184 97v1M183 100v1M182 102v1M181 105v1M180 107v2M179 110v1M178 113v1M177 115v1M176 118v1M175 120v2M174 123v1M173 126v1M172 128v1M171 131v1M170 133v2M169 136v1M168 139v1M167 141v1M166 144v1M165 146v2M164 149v1M163 152v1M162 154v1M161 157v1M160 159v2M159 162v1M158 165v1M157 167v1M156 170v1M155 172v2M154 175v1M153 178v1M152 180v1M151 183v1M150 185v2M149 188v1M148 190v2M147 193v1M146 196v1M145 198v2M144 201v1M143 203v2M142 206v1M141 209v1M140 211v2M139 214v1M138 216v2M137 219v1M136 222v1M135 224v2M134 227v1M133 229v2M132 232v1M131 235v1M130 237v2M129 240v1M128 242v2M127 245v1M126 248v1M125 250v2M124 253v1M123 255v2M122 258v1M121 261v1M120 263v1M119 266v1M118 268v2M117 271v1M116 274v1M115 276v1M114 279v1M113 281v2M112 284v1M111 287v1M110 289v1M109 292v1M108 294v2M107 297v1M106 300v1M105 302v1M104 305v1M103 307v2M102 310v1M101 313v1M100 315v1M99 318v1M98 320v2M97 323v1M96 326v1M95 328v1M94 331v1M93 333v2M92 336v1M91 339v1M90 341v1M89 344v1M88 346v2M87 349v1M86 351v2M85 354v1M84 357v1M83 359v2M82 362v1M81 364v2M80 367v1M79 370v1M78 372v2M77 375v1M76 377v2M75 380v1M74 383v1M73 385v2M72 388v1M71 390v2M70 393v1M69 396v1M68 398v2M67 401v1M66 403v2M65 406v1M64 409v1M63 411v2M62 414v1M61 416v2M60 419v1M59 422v1M58 424v1M57 427v1M56 429v2M55 432v1M54 435v1M53 437v1M52 440v1M51 442v2M50 445v1M49 448v1M48 450v1M47 453v1M46 455v2M45 458v1M44 461v1M43 463v1M42 466v1M41 468v2M40 471v1M39 474v1M38 476v1M37 479v1M36 481v2M35 484v1M34 487v1M33 489v1M32 492v1M31 494v2M30 497v1M29 500v1M28 502v1M27 505v1M26 507v2M25 510v1M24 512v2M23 515v1M249 1v1M248 4v1M247 6v2M246 9v2M245 12v2M244 15v1M243 18v1M242 21v1M241 23v2M240 26v2M239 29v2M238 32v1M237 35v1M236 38v1M235 41v1M234 43v2M233 46v2M232 49v1M231 52v1M230 55v1M229 58v1M228 60v2M227 63v2M226 66v1M225 69v1M224 72v1M223 75v1M222 77v2M221 80v2M220 83v2M219 86v1M218 89v1M217 92v1M216 94v2M215 97v2M214 100v2M213 103v1M212 106v1M211 109v1M210 111v2M209 114v2M208 117v2M207 120v1M206 123v1M205 126v1M204 129v1M203 131v2M202 134v2M201 137v1M200 140v1M199 143v1M198 146v1M197 148v2M196 151v2M195 154v1M194 157v1M193 160v1M192 163v1M191 165v2M190 168v2M189 171v2M188 174v1M187 177v1M186 180v1M185 182v2M184 185v2M183 188v2M182 191v1M181 194v1M180 197v1M179 199v2M178 202v2M177 205v2M176 208v1M175 211v1M174 214v1M173 217v1M172 219v2M171 222v2M170 225v1M169 228v1M168 231v1M167 234v1M166 236v2M165 239v2M164 242v2M163 245v1M162 248v1M161 251v1M160 253v2M159 256v2M158 259v2M157 262v1M156 265v1M155 268v1M154 270v2M153 273v2M152 276v2M151 279v1M150 282v1M149 285v1M148 288v1M147 290v2M146 293v2M145 296v1M144 299v1M143 302v1M142 305v1M141 307v2M140 310v2M139 313v1M138 316v1M137 319v1M136 322v1M135 324v2M134 327v2M133 330v2M132 333v1M131 336v1M130 339v1M129 341v2M128 344v2M127 347v2M126 350v1M125 353v1M124 356v1M123 358v2M122 361v2M121 364v2M120 367v1M119 370v1M118 373v1M117 376v1M116 378v2M115 381v2M114 384v1M113 387v1M112 390v1M111 393v1M110 395v2M109 398v2M108 401v2M107 404v1M106 407v1M105 410v1M104 412v2M103 415v2M102 418v2M101 421v1M100 424v1M99 427v1M98 429v2M97 432v2M96 435v2M95 438v1M94 441v1M93 444v1M92 447v1M91 449v2M90 452v2M89 455v1M88 458v1M87 461v1M86 464v1M85 466v2M84 469v2M83 472v1M82 475v1M81 478v1M80 481v1M79 483v2M78 486v2M77 489v2M76 492v1M75 495v1M74 498v1M73 500v2M72 503v2M71 506v2M70 509v1M69 512v1M68 515v1M67 517v1M277 1v1M276 4v1M275 7v1M274 10v2M273 13v2M272 16v2M271 19v2M270 22v2M269 26v1M268 29v1M267 32v1M266 35v2M265 38v2M264 41v2M263 44v2M262 48v1M261 51v1M260 54v1M259 57v2M258 60v2M257 63v2M256 66v2M255 69v2M254 73v1M253 76v1M252 79v1M251 82v2M250 85v2M249 88v2M248 91v2M247 95v1M246 98v1M245 101v1M244 104v1M243 107v2M242 110v2M241 113v2M240 116v2M239 120v1M238 123v1M237 126v1M236 129v2M235 132v2M234 135v2M233 138v2M232 142v1M231 145v1M230 148v1M229 151v1M228 154v2M227 157v2M226 160v2M225 163v2M224 167v1M223 170v1M222 173v1M221 176v2M220 179v2M219 182v2M218 185v2M217 188v2M216 192v1M215 195v1M214 198v1M213 201v2M212 204v2M211 207v2M210 210v2M209 214v1M208 217v1M207 220v1M206 223v1M205 226v2M204 229v2M203 232v2M202 235v2M201 239v1M200 242v1M199 245v1M198 248v2M197 251v2M196 254v2M195 257v2M194 261v1M193 264v1M192 267v1M191 270v1M190 273v2M189 276v2M188 279v2M187 282v2M186 286v1M185 289v1M184 292v1M183 295v2M182 298v2M181 301v2M180 304v2M179 307v2M178 311v1M177 314v1M176 317v1M175 320v2M174 323v2M173 326v2M172 329v2M171 333v1M170 336v1M169 339v1M168 342v2M167 345v2M166 348v2M165 351v2M164 354v2M163 358v1M162 361v1M161 364v1M160 367v2M159 370v2M158 373v2M157 376v2M156 380v1M155 383v1M154 386v1M153 389v1M152 392v2M151 395v2M150 398v2M149 401v2M148 405v1M147 408v1M146 411v1M145 414v2M144 417v2M143 420v2M142 423v2M141 426v2M140 430v1M139 433v1M138 436v1M137 439v2M136 442v2M135 445v2M134 448v2M133 452v1M132 455v1M131 458v1M130 461v2M129 464v2M128 467v2M127 470v2M126 473v2M125 477v1M124 480v1M123 483v1M122 486v2M121 489v2M120 492v2M119 495v2M118 499v1M117 502v1M116 505v1M115 508v1M114 511v2M113 514v2M112 517v1M305 0v2M304 4v2M303 7v2M302 11v2M301 14v2M300 18v2M299 21v2M298 25v2M297 28v2M296 32v2M295 35v2M294 39v2M293 42v2M292 46v2M291 49v2M290 53v2M289 56v2M288 60v2M287 63v2M286 67v1M285 70v2M284 74v1M283 77v2M282 81v1M281 84v2M280 88v1M279 91v2M278 95v1M277 98v2M276 102v1M275 105v2M274 109v1M273 112v2M272 116v1M271 119v2M270 123v1M269 126v2M268 130v1M267 133v2M266 137v1M265 140v2M264 144v1M263 147v2M262 151v1M261 154v2M260 158v1M259 161v2M258 165v1M257 168v2M256 171v2M255 175v2M254 178v2M253 182v2M252 185v2M251 189v2M250 192v2M249 196v2M248 199v2M247 203v2M246 206v2M245 210v2M244 213v2M243 217v2M242 220v2M241 224v2M240 227v2M239 231v2M238 234v2M237 238v2M236 241v2M235 245v2M234 248v2M233 252v2M232 255v2M231 259v2M230 262v2M229 266v2M228 269v2M227 273v1M226 276v2M225 280v1M224 283v2M223 287v1M222 290v2M221 294v1M220 297v2M219 301v1M218 304v2M217 308v1M216 311v2M215 315v1M214 318v2M213 322v1M212 325v2M211 329v1M210 332v2M209 336v1M208 339v2M207 343v1M206 346v2M205 350v1M204 353v2M203 357v1M202 360v2M201 364v1M200 367v2M199 371v1M198 374v2M197 377v2M196 381v2M195 384v2M194 388v2M193 391v2M192 395v2M191 398v2M190 402v2M189 405v2M188 409v2M187 412v2M186 416v2M185 419v2M184 423v2M183 426v2M182 430v2M181 433v2M180 437v2M179 440v2M178 444v2M177 447v2M176 451v2M175 454v2M174 458v2M173 461v2M172 465v2M171 468v2M170 472v2M169 475v2M168 479v2M167 482v2M166 486v1M165 489v2M164 493v1M163 496v2M162 500v1M161 503v2M160 507v1M159 510v2M158 514v1M157 517v1M333 0v2M332 4v2M331 8v2M330 12v2M329 16v2M328 20v2M327 24v2M326 28v2M325 32v2M324 36v2M323 40v2M322 44v2M321 48v2M320 52v1M319 55v2M318 59v2M317 63v2M316 67v2M315 71v2M314 75v2M313 79v2M312 83v2M311 87v2M310 91v2M309 95v2M308 99v2M307 103v2M306 107v2M305 111v2M304 115v2M303 119v2M302 123v1M301 126v2M300 130v2M299 134v2M298 138v2M297 142v2M296 146v2M295 150v2M294 154v2M293 158v2M292 162v2M291 166v2M290 170v2M289 174v2M288 178v2M287 182v2M286 186v2M285 190v2M284 194v2M283 197v2M282 201v2M281 205v2M280 209v2M279 213v2M278 217v2M277 221v2M276 225v2M275 229v2M274 233v2M273 237v2M272 241v2M271 245v2M270 249v2M269 253v2M268 257v2M267 261v2M266 265v2M265 268v2M264 272v2M263 276v2M262 280v2M261 284v2M260 288v2M259 292v2M258 296v2M257 300v2M256 304v2M255 308v2M254 312v2M253 316v2M252 320v2M251 324v2M250 328v2M249 332v2M248 336v2M247 340v1M246 343v2M245 347v2M244 351v2M243 355v2M242 359v2M241 363v2M240 367v2M239 371v2M238 375v2M237 379v2M236 383v2M235 387v2M234 391v2M233 395v2M232 399v2M231 403v2M230 407v2M229 411v1M228 414v2M227 418v2M226 422v2M225 426v2M224 430v2M223 434v2M222 438v2M221 442v2M220 446v2M219 450v2M218 454v2M217 458v2M216 462v2M215 466v2M214 470v2M213 474v2M212 478v2M211 482v2M210 485v2M209 489v2M208 493v2M207 497v2M206 501v2M205 505v2M204 509v2M203 513v2M202 517v1M361 0v2M360 5v2M359 9v2M358 14v2M357 18v2M356 23v2M355 27v2M354 32v2M353 36v3M352 41v2M351 45v3M350 50v2M349 54v3M348 59v2M347 64v2M346 68v2M345 73v2M344 77v2M343 82v2M342 86v2M341 91v2M340 95v3M339 100v2M338 104v3M337 109v2M336 113v3M335 118v2M334 122v3M333 127v2M332 132v2M331 136v2M330 141v2M329 145v2M328 150v2M327 154v2M326 159v2M325 163v3M324 168v2M323 172v3M322 177v2M321 181v3M320 186v2M319 190v3M318 195v2M317 200v2M316 204v2M315 209v2M314 213v2M313 218v2M312 222v2M311 227v2M310 231v3M309 236v2M308 240v3M307 245v2M306 249v3M305 254v2M304 258v3M303 263v2M302 268v2M301 272v2M300 277v2M299 281v2M298 286v2M297 290v2M296 295v2M295 299v3M294 304v2M293 308v3M292 313v2M291 317v3M290 322v2M289 326v3M288 331v2M287 336v2M286 340v2M285 345v2M284 349v2M283 354v2M282 358v3M281 363v2M280 367v3M279 372v2M278 376v3M277 381v2M276 385v3M275 390v2M274 395v2M273 399v2M272 404v2M271 408v2M270 413v2M269 417v2M268 422v2M267 426v3M266 431v2M265 435v3M264 440v2M263 444v3M262 449v2M261 453v3M260 458v2M259 463v2M258 467v2M257 472v2M256 476v2M255 481v2M254 485v2M253 490v2M252 494v3M251 499v2M250 503v3M249 508v2M248 512v3M247 517v1M389 0v2M388 5v3M387 10v3M386 16v2M385 21v3M384 26v3M383 32v2M382 37v3M381 42v3M380 48v2M379 53v3M378 58v3M377 64v2M376 69v3M375 74v3M374 80v2M373 85v3M372 90v3M371 96v2M370 101v3M369 106v3M368 112v2M367 117v3M366 122v3M365 128v2M364 133v3M363 138v3M362 144v2M361 149v3M360 154v3M359 160v2M358 165v3M357 170v3M356 176v2M355 181v3M354 186v3M353 192v2M352 197v3M351 202v3M350 208v2M349 213v3M348 218v3M347 224v2M346 229v3M345 234v3M344 240v2M343 245v3M342 250v3M341 256v2M340 261v3M339 266v3M338 272v2M337 277v3M336 282v3M335 288v2M334 293v3M333 298v3M332 304v2M331 309v3M330 314v3M329 320v2M328 325v3M327 330v3M326 336v2M325 341v3M324 346v3M323 352v2M322 357v3M321 362v3M320 368v2M319 373v3M318 378v3M317 384v2M316 389v3M315 394v3M314 400v2M313 405v3M312 410v3M311 416v2M310 421v3M309 426v3M308 432v2M307 437v3M306 442v3M305 448v2M304 453v3M303 458v3M302 464v2M301 469v3M300 474v3M299 480v2M298 485v3M297 490v3M296 496v2M295 501v3M294 506v3M293 512v2M292 517v1M417 0v3M416 6v3M415 13v3M414 19v3M413 25v4M412 32v3M411 38v4M410 45v3M409 51v4M408 58v3M407 64v4M406 71v3M405 77v3M404 84v3M403 90v3M402 97v3M401 103v3M400 110v3M399 116v3M398 122v4M397 129v3M396 135v4M395 142v3M394 148v4M393 155v3M392 161v4M391 168v3M390 174v3M389 181v3M388 187v3M387 194v3M386 200v3M385 207v3M384 213v3M383 219v4M382 226v3M381 232v4M380 239v3M379 245v4M378 252v3M377 258v4M376 265v3M375 271v3M374 278v3M373 284v3M372 291v3M371 297v3M370 304v3M369 310v3M368 316v4M367 323v3M366 329v4M365 336v3M364 342v4M363 349v3M362 355v4M361 362v3M360 368v3M359 375v3M358 381v3M357 388v3M356 394v3M355 401v3M354 407v3M353 414v3M352 420v3M351 426v4M350 433v3M349 439v4M348 446v3M347 452v4M346 459v3M345 465v3M344 472v3M343 478v3M342 485v3M341 491v3M340 498v3M339 504v3M338 511v3M337 517v1M472 3v5M471 14v6M470 25v6M469 37v5M468 48v6M467 59v6M466 71v5M465 82v5M464 93v6M463 104v6M462 116v5M461 127v6M460 138v6M459 150v5M458 161v5M457 172v6M456 183v6M455 195v5M454 206v6M453 217v6M452 229v5M451 240v6M450 251v6M449 262v6M448 274v5M447 285v6M446 296v6M445 308v5M444 319v6M443 330v6M442 341v6M441 353v5M440 364v6M439 375v6M438 387v5M437 398v6M436 409v6M435 421v5M434 432v5M433 443v6M432 454v6M431 466v5M430 477v6M429 488v6M428 500v5M427 511v5M500 2v9M499 20v9M498 38v9M497 56v9M496 74v9M495 92v9M494 110v9M493 128v9M492 146v9M491 164v9M490 182v9M489 200v9M488 218v9M487 237v9M486 255v9M485 273v9M484 291v9M483 309v9M482 327v9M481 345v9M480 363v9M479 381v9M478 399v9M477 417v9M476 435v9M475 453v9M474 471v9M473 489v9M472 507v9M528 0v21M527 44v22M526 89v22M525 134v22M524 179v22M523 223v23M522 268v23M521 313v23M520 358v23M519 403v23M518 448v22M517 493v22M557 13v46M558 105v46M559 197v46M560 289v46M561 381v46M562 473v45M585 6v12M586 29v11M587 52v11M588 74v12M589 97v11M590 120v11M591 142v12M592 165v12M593 188v11M594 211v11M595 233v12M596 256v11M597 279v11M598 301v12M599 324v12M600 347v11M601 370v11M602 392v12M603 415v11M604 438v11M605 461v11M606 483v12M607 506v11M613 5v7M614 18v7M615 31v7M616 44v7M617 57v7M618 70v7M619 83v6M620 96v6M621 109v6M622 122v6M623 135v6M624 148v6M625 161v6M626 174v6M627 187v6M628 200v6M629 213v6M630 226v6M631 239v6M632 252v6M633 265v6M634 278v6M635 291v6M636 303v7M637 316v7M638 329v7M639 342v7M640 355v7M641 368v7M642 381v7M643 394v7M644 407v7M645 420v7M646 433v7M647 446v7M648 459v7M649 472v7M650 485v7M651 498v7M652 511v6M640 0v1M641 5v5M642 14v5M643 23v5M644 32v5M645 41v5M646 50v5M647 59v4M648 68v4M649 77v4M650 86v4M651 95v4M652 104v4M653 113v4M654 122v4M655 131v4M656 140v4M657 149v4M658 158v4M659 167v4M660 176v4M661 185v4M662 193v5M663 202v5M664 211v5M665 220v5M666 229v5M667 238v5M668 247v5M669 256v5M670 265v5M671 274v5M672 283v5M673 292v5M674 301v5M675 310v4M676 319v4M677 328v4M678 337v4M679 346v4M680 355v4M681 364v4M682 373v4M683 382v4M684 391v4M685 400v4M686 409v4M687 418v4M688 427v4M689 435v5M690 444v5M691 453v5M692 462v5M693 471v5M694 480v5M695 489v5M696 498v5M697 507v5M698 516v2M670 2v4M671 9v4M672 16v4M673 23v4M674 30v4M675 37v4M676 44v4M677 51v4M678 58v4M679 65v4M680 72v4M681 79v4M682 86v4M683 93v4M684 100v4M685 108v3M686 115v3M687 122v3M688 129v3M689 136v3M690 143v3M691 150v3M692 157v3M693 164v3M694 171v3M695 178v3M696 185v3M697 192v3M698 199v3M699 206v3M700 213v3M701 220v3M702 227v3M703 234v3M704 241v3M705 248v3M706 255v3M707 262v3M708 269v3M709 276v3M710 283v3M711 290v3M712 297v3M713 304v3M714 311v3M715 318v3M716 325v3M717 332v3M718 339v3M719 346v3M720 353v3M721 360v3M722 367v4M723 374v4M724 381v4M725 388v4M726 395v4M727 402v4M728 409v4M729 416v4M730 423v4M731 430v4M732 437v4M733 444v4M734 451v4M735 458v4M736 465v4M737 472v4M738 479v4M739 486v4M740 493v4M741 500v4M742 507v4M743 514v4M698 1v3M699 7v3M700 13v3M701 18v3M702 24v3M703 30v3M704 36v2M705 41v3M706 47v3M707 53v2M708 58v3M709 64v3M710 70v3M711 75v3M712 81v3M713 87v3M714 92v3M715 98v3M716 104v3M717 110v2M718 115v3M719 121v3M720 127v2M721 132v3M722 138v3M723 144v3M724 149v3M725 155v3M726 161v3M727 167v2M728 172v3M729 178v3M730 184v2M731 189v3M732 195v3M733 201v3M734 206v3M735 212v3M736 218v3M737 223v3M738 229v3M739 235v3M740 241v2M741 246v3M742 252v3M743 258v2M744 263v3M745 269v3M746 275v3M747 280v3M748 286v3M749 292v3M750 297v3M751 303v3M752 309v3M753 315v2M754 320v3M755 326v3M756 332v2M757 337v3M758 343v3M759 349v3M760 354v3M761 360v3M762 366v3M763 371v3M764 377v3M765 383v3M766 389v2M767 394v3M768 400v3M769 406v2M770 411v3M771 417v3M772 423v3M773 428v3M774 434v3M775 440v3M776 445v3M777 451v3M778 457v3M779 463v2M780 468v3M781 474v3M782 480v2M783 485v3M784 491v3M785 497v3M786 502v3M787 508v3M788 514v3M754 0v2M755 4v2M756 9v2M757 13v2M758 17v2M759 21v2M760 25v2M761 29v2M762 33v2M763 37v3M764 42v2M765 46v2M766 50v2M767 54v2M768 58v2M769 62v2M770 66v2M771 71v2M772 75v2M773 79v2M774 83v2M775 87v2M776 91v2M777 95v2M778 99v3M779 104v2M780 108v2M781 112v2M782 116v2M783 120v2M784 124v2M785 128v2M786 133v2M787 137v2M788 141v2M789 145v2M790 149v2M791 153v2M792 157v2M793 161v3M794 166v2M795 170v2M796 174v2M797 178v2M798 182v2M799 186v2M800 190v2M801 195v2M802 199v2M803 203v2M804 207v2M805 211v2M806 215v2M807 219v2M808 223v3M809 228v2M810 232v2M811 236v2M812 240v2M813 244v2M814 248v2M815 252v2M816 257v2M817 261v2M818 265v2M819 269v2M820 273v2M821 277v2M822 281v2M823 286v2M824 290v2M825 294v2M826 298v2M827 302v2M828 306v2M829 310v2M830 314v3M831 319v2M832 323v2M833 327v2M834 331v2M835 335v2M836 339v2M837 343v2M838 348v2M839 352v2M840 356v2M841 360v2M842 364v2M843 368v2M844 372v2M845 376v3M846 381v2M847 385v2M848 389v2M849 393v2M850 397v2M851 401v2M852 405v2M853 410v2M854 414v2M855 418v2M856 422v2M857 426v2M858 430v2M859 434v2M860 438v3M861 443v2M862 447v2M863 451v2M864 455v2M865 459v2M866 463v2M867 467v2M868 472v2M869 476v2M870 480v2M871 484v2M872 488v2M873 492v2M874 496v2M875 500v3M876 505v2M877 509v2M878 513v2M879 517v1M782 0v2M783 3v2M784 7v2M785 11v2M786 14v2M787 18v2M788 22v1M789 25v2M790 29v2M791 33v1M792 36v2M793 40v2M794 43v2M795 47v2M796 51v2M797 54v2M798 58v2M799 62v1M800 65v2M801 69v2M802 73v1M803 76v2M804 80v2M805 83v2M806 87v2M807 91v2M808 94v2M809 98v2M810 102v1M811 105v2M812 109v2M813 113v1M814 116v2M815 120v2M816 123v2M817 127v2M818 131v2M819 134v2M820 138v2M821 142v1M822 145v2M823 149v2M824 153v1M825 156v2M826 160v2M827 163v2M828 167v2M829 171v2M830 174v2M831 178v2M832 182v1M833 185v2M834 189v2M835 193v1M836 196v2M837 200v2M838 203v2M839 207v2M840 211v2M841 214v2M842 218v2M843 222v1M844 225v2M845 229v2M846 233v1M847 236v2M848 240v2M849 243v2M850 247v2M851 251v2M852 254v2M853 258v2M854 262v1M855 265v2M856 269v2M857 273v1M858 276v2M859 280v2M860 283v2M861 287v2M862 291v2M863 294v2M864 298v2M865 302v1M866 305v2M867 309v2M868 313v1M869 316v2M870 320v2M871 323v2M872 327v2M873 331v2M874 334v2M875 338v2M876 342v1M877 345v2M878 349v2M879 353v1M880 356v2M881 360v2M882 363v2M883 367v2M884 371v2M885 374v2M886 378v2M887 382v1M888 385v2M889 389v2M890 393v1M891 396v2M892 400v2M893 403v2M894 407v2M895 411v2M896 414v2M897 418v2M898 422v1M899 425v2M900 429v2M901 433v1M902 436v2M903 440v2M904 443v2M905 447v2M906 451v2M907 454v2M908 458v2M909 462v1M910 465v2M911 469v2M912 473v1M913 476v2M914 480v2M915 483v2M916 487v2M917 491v2M918 494v2M919 498v2M920 502v1M921 505v2M922 509v2M923 513v1M924 516v2M810 0v1M811 3v1M812 6v2M813 9v2M814 12v2M815 16v1M816 19v2M817 22v2M818 25v2M819 29v1M820 32v2M821 35v2M822 38v2M823 42v1M824 45v1M825 48v2M826 51v2M827 55v1M828 58v1M829 61v2M830 64v2M831 68v1M832 71v1M833 74v2M834 77v2M835 81v1M836 84v1M837 87v2M838 90v2M839 94v1M840 97v1M841 100v2M842 103v2M843 107v1M844 110v1M845 113v2M846 116v2M847 120v1M848 123v1M849 126v2M850 129v2M851 132v2M852 136v1M853 139v2M854 142v2M855 145v2M856 149v1M857 152v2M858 155v2M859 158v2M860 162v1M861 165v2M862 168v2M863 171v2M864 175v1M865 178v2M866 181v2M867 184v2M868 188v1M869 191v2M870 194v2M871 197v2M872 201v1M873 204v2M874 207v2M875 210v2M876 214v1M877 217v1M878 220v2M879 223v2M880 227v1M881 230v1M882 233v2M883 236v2M884 240v1M885 243v1M886 246v2M887 249v2M888 253v1M889 256v1M890 259v2M891 262v2M892 266v1M893 269v1M894 272v2M895 275v2M896 279v1M897 282v1M898 285v2M899 288v2M900 292v1M901 295v1M902 298v2M903 301v2M904 304v2M905 308v1M906 311v2M907 314v2M908 317v2M909 321v1M910 324v2M911 327v2M912 330v2M913 334v1M914 337v2M915 340v2M916 343v2M917 347v1M918 350v2M919 353v2M920 356v2M921 360v1M922 363v2M923 366v2M924 369v2M925 373v1M926 376v2M927 379v2M928 382v2M929 386v1M930 389v1M931 392v2M932 395v2M933 399v1M934 402v1M935 405v2M936 408v2M937 412v1M938 415v1M939 418v2M940 421v2M941 425v1M942 428v1M943 431v2M944 434v2M945 438v1M946 441v1M947 444v2M948 447v2M949 451v1M950 454v1M951 457v2M952 460v2M953 464v1M954 467v1M955 470v2M956 473v2M957 476v2M958 480v1M959 483v2M960 486v2M961 489v2M962 493v1M963 496v2M964 499v2M965 502v2M966 506v1M967 509v2M968 512v2M969 515v2M838 0v1M839 2v1M840 5v1M841 8v1M842 11v1M843 14v1M844 17v1M845 20v1M846 23v1M847 25v2M848 28v2M849 31v2M850 34v2M851 37v2M852 40v2M853 43v2M854 46v1M855 49v1M856 52v1M857 55v1M858 58v1M859 61v1M860 64v1M861 66v2M862 69v2M863 72v2M864 75v2M865 78v2M866 81v2M867 84v2M868 87v1M869 90v1M870 93v1M871 96v1M872 99v1M873 102v1M874 105v1M875 108v1M876 110v2M877 113v2M878 116v2M879 119v2M880 122v2M881 125v2M882 128v1M883 131v1M884 134v1M885 137v1M886 140v1M887 143v1M888 146v1M889 149v1M890 151v2M891 154v2M892 157v2M893 160v2M894 163v2M895 166v2M896 169v2M897 172v1M898 175v1M899 178v1M900 181v1M901 184v1M902 187v1M903 190v1M904 192v2M905 195v2M906 198v2M907 201v2M908 204v2M909 207v2M910 210v2M911 213v1M912 216v1M913 219v1M914 222v1M915 225v1M916 228v1M917 231v1M918 234v1M919 236v2M920 239v2M921 242v2M922 245v2M923 248v2M924 251v2M925 254v1M926 257v1M927 260v1M928 263v1M929 266v1M930 269v1M931 272v1M932 275v1M933 277v2M934 280v2M935 283v2M936 286v2M937 289v2M938 292v2M939 295v1M940 298v1M941 301v1M942 304v1M943 307v1M944 310v1M945 313v1M946 316v1M947 318v2M948 321v2M949 324v2M950 327v2M951 330v2M952 333v2M953 336v2M954 339v1M955 342v1M956 345v1M957 348v1M958 351v1M959 354v1M960 357v1M961 359v2M962 362v2M963 365v2M964 368v2M965 371v2M966 374v2M967 377v2M968 380v1M969 383v1M970 386v1M971 389v1M972 392v1M973 395v1M974 398v1M975 401v1M976 403v2M977 406v2M978 409v2M979 412v2M980 415v2M867 1v2M868 4v1M869 7v1M870 9v2M871 12v1M872 15v1M873 17v2M874 20v1M875 23v1M876 26v1M877 28v2M878 31v1M879 34v1M880 36v2M881 39v1M882 42v1M883 44v2M884 47v1M885 50v1M886 52v2M887 55v1M888 58v1M889 60v2M890 63v1M891 66v1M892 68v2M893 71v1M894 74v1M895 76v2M896 79v1M897 82v1M898 84v2M899 87v1M900 90v1M901 92v2M902 95v1M903 98v1M904 100v2M905 103v1M906 106v1M907 108v2M908 111v1M909 114v1M910 116v2M911 119v1M912 122v1M913 124v2M914 127v1M915 130v1M916 132v2M917 135v1M918 138v1M919 140v2M920 143v1M921 146v1M922 148v2M923 151v1M924 154v1M925 156v2M926 159v1M927 162v1M928 164v2M929 167v1M930 170v1M931 172v2M932 175v1M933 178v1M934 180v2M935 183v1M936 186v1M937 188v2M938 191v1M939 194v1M940 196v2M941 199v1M942 202v1M943 204v2M944 207v1M945 210v1M946 212v2M947 215v1M948 218v1M949 220v2M950 223v1M951 226v1M952 228v2M953 231v1M954 234v1M955 236v2M956 239v1M957 242v1M958 244v2M959 247v1M960 250v1M961 252v2M962 255v2M963 258v1M964 261v1M965 263v2M966 266v1M967 269v1M968 271v2M969 274v1M970 277v1M971 279v2M972 282v1M973 285v1M974 287v2M975 290v1M976 293v1M977 295v2M978 298v1M979 301v1M980 303v2M895 1v1M896 3v2M897 6v1M898 8v2M899 11v1M900 13v1M901 16v1M902 18v1M903 21v1M904 23v1M905 26v1M906 28v1M907 30v2M908 33v1M909 35v2M910 38v1M911 40v1M912 43v1M913 45v1M914 48v1M915 50v1M916 52v2M917 55v1M918 57v2M919 60v1M920 62v2M921 65v1M922 67v1M923 70v1M924 72v1M925 75v1M926 77v1M927 79v2M928 82v1M929 84v2M930 87v1M931 89v2M932 92v1M933 94v1M934 97v1M935 99v1M936 102v1M937 104v1M938 106v2M939 109v1M940 111v2M941 114v1M942 116v1M943 119v1M944 121v1M945 124v1M946 126v1M947 129v1M948 131v1M949 133v2M950 136v1M951 138v2M952 141v1M953 143v1M954 146v1M955 148v1M956 151v1M957 153v1M958 156v1M959 158v1M960 160v2M961 163v1M962 165v2M963 168v1M964 170v1M965 173v1M966 175v1M967 178v1M968 180v1M969 183v1M970 185v1M971 187v2M972 190v1M973 192v2M974 195v1M975 197v1M976 200v1M977 202v1M978 205v1M979 207v1M980 209v2M923 1v1M924 3v1M925 5v1M926 7v1M927 10v1M928 12v1M929 14v1M930 16v2M931 19v1M932 21v1M933 23v1M934 25v2M935 28v1M936 30v1M937 32v1M938 35v1M939 37v1M940 39v1M941 41v1M942 44v1M943 46v1M944 48v1M945 50v2M946 53v1M947 55v1M948 57v1M949 60v1M950 62v1M951 64v1M952 66v1M953 69v1M954 71v1M955 73v1M956 75v2M957 78v1M958 80v1M959 82v1M960 84v2M961 87v1M962 89v1M963 91v1M964 94v1M965 96v1M966 98v1M967 100v1M968 103v1M969 105v1M970 107v1M971 109v2M972 112v1M973 114v1M974 116v1M975 118v2M976 121v1M977 123v1M978 125v1M979 128v1M980 130v1M951 0v1M952 2v1M953 4v1M954 6v1M955 9v1M956 11v1M957 13v1M958 15v1M959 17v1M960 19v1M961 21v1M962 23v1M963 25v1M964 28v1M965 30v1M966 32v1M967 34v1M968 36v1M969 38v1M970 40v1M971 42v1M972 44v1M973 47v1M974 49v1M975 51v1M976 53v1M977 55v1M978 57v1M979 59v1M980 61v1M979 0v1M980 2v1"/>
<path id="pa1" transform="translate(0 .5)" d="M0 1h2M7 2h6M18 3h6M30 4h5M41 5h5M52 6h6M63 7h6M74 8h6M85 9h6M97 10h5M108 11h5M119 12h6M130 13h6M141 14h6M153 15h5M164 16h5M175 17h5M186 18h6M197 19h6M208 20h6M220 21h5M231 22h5M242 23h5M253 24h6M264 25h6M275 26h6M287 27h5M298 28h5M309 29h6M320 30h6M331 31h6M342 32h6M354 33h5M365 34h5M376 35h6M387 36h6M398 37h6M410 38h5M421 39h5M432 40h5M443 41h6M454 42h6M465 43h6M477 44h5M488 45h5M499 46h5M510 47h6M521 48h6M532 49h6M544 50h5M555 51h5M566 52h6M577 53h6M588 54h6M599 55h6M611 56h5M622 57h5M633 58h6M644 59h6M655 60h6M667 61h5M678 62h5M689 63h5M700 64h6M711 65h6M722 66h6M734 67h5M745 68h5M756 69h5M767 70h6M778 71h6M789 72h6M801 73h5M812 74h5M823 75h6M834 76h6M845 77h6M856 78h6M868 79h5M879 80h5M890 81h6M901 82h6M912 83h6M924 84h5M935 85h5M946 86h5M957 87h6M968 88h6M979 89h2M4 251h4M13 252h4M21 253h4M30 254h4M38 255h5M47 256h4M55 257h5M64 258h4M72 259h5M81 260h4M89 261h5M98 262h4M106 263h5M115 264h4M123 265h5M132 266h4M140 267h5M149 268h4M157 269h5M166 270h4M174 271h5M183 272h4M191 273h5M200 274h4M208 275h5M217 276h4M225 277h5M234 278h4M242 279h5M251 280h4M259 281h5M268 282h4M276 283h5M285 284h4M294 285h4M302 286h4M311 287h4M319 288h4M328 289h4M336 290h4M345 291h4M353 292h4M362 293h4M370 294h4M379 295h4M387 296h4M396 297h4M404 298h4M413 299h4M421 300h4M430 301h4M438 302h4M447 303h4M455 304h4M464 305h4M472 306h4M481 307h4M489 308h4M498 309h4M506 310h4M515 311h4M523 312h5M532 313h4M540 314h5M549 315h4M557 316h5M566 317h4M574 318h5M583 319h4M591 320h5M600 321h4M608 322h5M617 323h4M625 324h5M634 325h4M642 326h5M651 327h4M659 328h5M668 329h4M676 330h5M685 331h4M693 332h5M702 333h4M710 334h5M719 335h4M727 336h5M736 337h4M744 338h5M753 339h4M762 340h4M770 341h4M779 342h4M787 343h4M796 344h4M804 345h4M813 346h4M821 347h4M830 348h4M838 349h4M847 350h4M855 351h4M864 352h4M872 353h4M881 354h4M889 355h4M898 356h4M906 357h4M915 358h4M923 359h4M932 360h4M940 361h4M949 362h4M957 363h4M966 364h4M974 365h4"/>
<path id="pb1" transform="translate(.5 0)" d="M165 1v1M164 3v2M163 6v1M162 8v1M161 10v1M160 12v1M159 15v1M158 17v1M157 19v1M156 21v1M155 23v2M154 26v1M153 28v1M152 30v1M151 32v1M150 35v1M149 37v1M148 39v1M147 41v1M146 43v2M145 46v1M144 48v1M143 50v1M142 52v1M141 55v1M140 57v1M139 59v1M138 61v1M137 63v1M136 66v1M135 68v1M134 70v1M133 72v1M132 74v2M131 77v1M130 79v1M129 81v1M128 83v1M127 86v1M126 88v1M125 90v1M124 92v1M123 94v2M122 97v1M121 99v1M120 101v1M119 103v1M118 106v1M117 108v1M116 110v1M115 112v1M114 114v1M113 117v1M112 119v1M111 121v1M110 123v1M109 125v2M108 128v1M107 130v1M106 132v1M105 134v1M104 137v1M103 139v1M102 141v1M101 143v1M100 145v2M99 148v1M98 150v1M97 152v1M96 154v1M95 157v1M94 159v1M93 161v1M92 163v1M91 165v2M90 168v1M89 170v1M88 172v1M87 174v1M86 176v2M85 179v1M84 181v1M83 183v1M82 185v1M81 188v1M80 190v1M79 192v1M78 194v1M77 196v2M76 199v1M75 201v1M74 203v1M73 205v1M72 208v1M71 210v1M70 212v1M69 214v1M68 216v2M67 219v1M66 221v1M65 223v1M64 225v1M63 228v1M62 230v1M61 232v1M60 234v1M59 236v1M58 239v1M57 241v1M56 243v1M55 245v1M54 247v2M53 250v1M52 252v1M51 254v1M50 256v1M49 259v1M48 261v1M47 263v1M46 265v1M45 267v2M44 270v1M43 272v1M42 274v1M41 276v1M40 279v1M39 281v1M38 283v1M37 285v1M36 287v2M35 290v1M34 292v1M33 294v1M32 296v1M31 298v2M30 301v1M29 303v1M28 305v1M27 307v1M26 310v1M25 312v1M24 314v1M23 316v1M22 318v2M21 321v1M20 323v1M19 325v1M18 327v1M17 330v1M16 332v1M15 334v1M14 336v1M13 338v2M12 341v1M11 343v1M10 345v1M9 347v1M8 350v1M7 352v1M6 354v1M5 356v1M4 358v1M3 361v1M2 363v1M1 365v1M0 367v1M444 4v4M443 12v4M442 20v4M441 28v4M440 36v4M439 44v4M438 52v4M437 60v4M436 68v4M435 76v4M434 84v4M433 92v4M432 100v4M431 108v4M430 116v4M429 124v4M428 132v4M427 140v4M426 148v4M425 157v4M424 165v4M423 173v4M422 181v4M421 189v4M420 197v4M419 205v4M418 213v4M417 221v4M416 229v4M415 237v4M414 245v4M413 253v4M412 261v4M411 269v4M410 277v4M409 285v4M408 293v4M407 301v4M406 309v4M405 317v4M404 325v4M403 333v4M402 341v4M401 349v4M400 357v4M399 365v5M398 374v4M397 382v4M396 390v4M395 398v4M394 406v4M393 414v4M392 422v4M391 430v4M390 438v4M389 446v4M388 454v4M387 462v4M386 470v4M385 478v4M384 486v4M383 494v4M382 502v4M381 510v4M726 1v2M727 6v2M728 10v3M729 15v3M730 20v2M731 25v2M732 30v2M733 34v3M734 39v2M735 44v2M736 49v2M737 53v3M738 58v3M739 63v2M740 68v2M741 73v2M742 77v3M743 82v3M744 87v2M745 92v2M746 97v2M747 101v3M748 106v3M749 111v2M750 116v2M751 121v2M752 125v3M753 130v2M754 135v2M755 140v2M756 144v3M757 149v3M758 154v2M759 159v2M760 164v2M761 168v3M762 173v3M763 178v2M764 183v2M765 188v2M766 192v3M767 197v3M768 202v2M769 207v2M770 212v2M771 216v3M772 221v2M773 226v2M774 231v2M775 235v3M776 240v3M777 245v2M778 250v2M779 255v2M780 259v3M781 264v3M782 269v2M783 274v2M784 279v2M785 283v3M786 288v3M787 293v2M788 298v2M789 303v2M790 307v3M791 312v3M792 317v2M793 322v2M794 326v3M795 331v3M796 336v2M797 341v2M798 346v2M799 350v3M800 355v3M801 360v2M802 365v2M803 370v2M804 374v3M805 379v3M806 384v2M807 389v2M808 394v2M809 398v3M810 403v3M811 408v2M812 413v2M813 417v3M814 422v3M815 427v2M816 432v2M817 437v2M818 441v3M819 446v3M820 451v2M821 456v2M822 461v2M823 465v3M824 470v3M825 475v2M826 480v2M827 485v2M828 489v3M829 494v3M830 499v2M831 504v2M832 508v3M833 513v3"/>
<clipPath id="ce"><ellipse cx="354.15" cy="257.37" rx="282.04" ry="237.22" transform="rotate(-3.255 354.15 257.37)"/></clipPath>
</defs>
<g fill="none" stroke-width="1" shape-rendering="crispEdges">
<use href="#pa0" stroke="url(#g_amin)"/><use href="#pb0" stroke="url(#g_bmin)"/><use href="#pa1" stroke="url(#g_amaj)"/><use href="#pb1" stroke="url(#g_bmaj)"/>
</g>
<rect x="972" y="0" width="9" height="518" fill="#000" fill-opacity="0.5"/>
<g><ellipse cx="354.15" cy="257.37" rx="282.04" ry="237.22" transform="rotate(-3.255 354.15 257.37)" fill="#1b6469" shape-rendering="crispEdges"/>
<ellipse cx="354.16" cy="256.81" rx="280.51" ry="235.87" transform="rotate(-3.250 354.16 256.81)" fill="#1b6368"/>
<ellipse cx="354.17" cy="256.27" rx="278.98" ry="234.52" transform="rotate(-3.246 354.17 256.27)" fill="#1b6368"/>
<ellipse cx="354.17" cy="255.72" rx="277.45" ry="233.18" transform="rotate(-3.241 354.17 255.72)" fill="#1b6368"/>
<ellipse cx="354.18" cy="255.18" rx="275.92" ry="231.83" transform="rotate(-3.236 354.18 255.18)" fill="#1a6267"/>
<ellipse cx="354.19" cy="254.64" rx="274.39" ry="230.49" transform="rotate(-3.231 354.19 254.64)" fill="#1a6267"/>
<ellipse cx="354.20" cy="254.10" rx="272.86" ry="229.16" transform="rotate(-3.226 354.20 254.10)" fill="#1a6267"/>
<ellipse cx="354.21" cy="253.57" rx="271.34" ry="227.82" transform="rotate(-3.221 354.21 253.57)" fill="#1a6166"/>
<ellipse cx="354.22" cy="253.04" rx="269.81" ry="226.48" transform="rotate(-3.217 354.22 253.04)" fill="#1a6166"/>
<ellipse cx="354.22" cy="252.51" rx="268.29" ry="225.15" transform="rotate(-3.212 354.22 252.51)" fill="#1a6166"/>
<ellipse cx="354.23" cy="251.99" rx="266.76" ry="223.82" transform="rotate(-3.208 354.23 251.99)" fill="#1a6065"/>
<ellipse cx="354.24" cy="251.47" rx="265.24" ry="222.49" transform="rotate(-3.203 354.24 251.47)" fill="#1a6065"/>
<ellipse cx="354.25" cy="250.96" rx="263.72" ry="221.16" transform="rotate(-3.198 354.25 250.96)" fill="#196065"/>
<ellipse cx="354.26" cy="250.45" rx="262.20" ry="219.84" transform="rotate(-3.194 354.26 250.45)" fill="#195f64"/>
<ellipse cx="354.26" cy="249.94" rx="260.68" ry="218.51" transform="rotate(-3.190 354.26 249.94)" fill="#195f64"/>
<ellipse cx="354.27" cy="249.43" rx="259.16" ry="217.19" transform="rotate(-3.185 354.27 249.43)" fill="#195f64"/>
<ellipse cx="354.28" cy="248.93" rx="257.65" ry="215.87" transform="rotate(-3.181 354.28 248.93)" fill="#195e63"/>
<ellipse cx="354.29" cy="248.43" rx="256.13" ry="214.55" transform="rotate(-3.176 354.29 248.43)" fill="#195e63"/>
<ellipse cx="354.29" cy="247.93" rx="254.62" ry="213.24" transform="rotate(-3.172 354.29 247.93)" fill="#195e63"/>
<ellipse cx="354.30" cy="247.44" rx="253.10" ry="211.92" transform="rotate(-3.168 354.30 247.44)" fill="#195d62"/>
<ellipse cx="354.31" cy="246.95" rx="251.59" ry="210.61" transform="rotate(-3.164 354.31 246.95)" fill="#185d62"/>
<ellipse cx="354.32" cy="246.47" rx="250.08" ry="209.30" transform="rotate(-3.159 354.32 246.47)" fill="#185d61"/>
<ellipse cx="354.32" cy="245.98" rx="248.57" ry="207.99" transform="rotate(-3.155 354.32 245.98)" fill="#185c61"/>
<ellipse cx="354.33" cy="245.50" rx="247.06" ry="206.68" transform="rotate(-3.151 354.33 245.50)" fill="#185c61"/>
<ellipse cx="354.34" cy="245.03" rx="245.55" ry="205.37" transform="rotate(-3.147 354.34 245.03)" fill="#185c60"/>
<ellipse cx="354.35" cy="244.55" rx="244.04" ry="204.07" transform="rotate(-3.143 354.35 244.55)" fill="#185b60"/>
<ellipse cx="354.35" cy="244.08" rx="242.53" ry="202.76" transform="rotate(-3.139 354.35 244.08)" fill="#185b60"/>
<ellipse cx="354.36" cy="243.62" rx="241.03" ry="201.46" transform="rotate(-3.135 354.36 243.62)" fill="#185b5f"/>
<ellipse cx="354.37" cy="243.15" rx="239.52" ry="200.16" transform="rotate(-3.131 354.37 243.15)" fill="#175a5f"/>
<ellipse cx="354.37" cy="242.69" rx="238.02" ry="198.86" transform="rotate(-3.127 354.37 242.69)" fill="#175a5f"/>
<ellipse cx="354.38" cy="242.24" rx="236.52" ry="197.57" transform="rotate(-3.123 354.38 242.24)" fill="#175a5e"/>
<ellipse cx="354.39" cy="241.78" rx="235.01" ry="196.27" transform="rotate(-3.119 354.39 241.78)" fill="#17595e"/>
<ellipse cx="354.39" cy="241.33" rx="233.51" ry="194.98" transform="rotate(-3.116 354.39 241.33)" fill="#17595d"/>
<ellipse cx="354.40" cy="240.88" rx="232.01" ry="193.69" transform="rotate(-3.112 354.40 240.88)" fill="#17585d"/>
<ellipse cx="354.41" cy="240.44" rx="230.51" ry="192.40" transform="rotate(-3.108 354.41 240.44)" fill="#17585d"/>
<ellipse cx="354.41" cy="240.00" rx="229.02" ry="191.11" transform="rotate(-3.104 354.41 240.00)" fill="#17585c"/>
<ellipse cx="354.42" cy="239.56" rx="227.52" ry="189.82" transform="rotate(-3.101 354.42 239.56)" fill="#16575c"/>
<ellipse cx="354.43" cy="239.13" rx="226.02" ry="188.53" transform="rotate(-3.097 354.43 239.13)" fill="#16575b"/>
<ellipse cx="354.43" cy="238.69" rx="224.53" ry="187.25" transform="rotate(-3.094 354.43 238.69)" fill="#16575b"/>
<ellipse cx="354.44" cy="238.26" rx="223.03" ry="185.97" transform="rotate(-3.090 354.44 238.26)" fill="#16565b"/>
<ellipse cx="354.45" cy="237.84" rx="221.54" ry="184.68" transform="rotate(-3.086 354.45 237.84)" fill="#16565a"/>
<ellipse cx="354.45" cy="237.42" rx="220.05" ry="183.40" transform="rotate(-3.083 354.45 237.42)" fill="#16555a"/>
<ellipse cx="354.46" cy="237.00" rx="218.55" ry="182.13" transform="rotate(-3.079 354.46 237.00)" fill="#165559"/>
<ellipse cx="354.47" cy="236.58" rx="217.06" ry="180.85" transform="rotate(-3.076 354.47 236.58)" fill="#155559"/>
<ellipse cx="354.47" cy="236.17" rx="215.57" ry="179.57" transform="rotate(-3.073 354.47 236.17)" fill="#155459"/>
<ellipse cx="354.48" cy="235.76" rx="214.08" ry="178.30" transform="rotate(-3.069 354.48 235.76)" fill="#155458"/>
<ellipse cx="354.49" cy="235.35" rx="212.59" ry="177.03" transform="rotate(-3.066 354.49 235.35)" fill="#155458"/>
<ellipse cx="354.49" cy="234.95" rx="211.11" ry="175.75" transform="rotate(-3.063 354.49 234.95)" fill="#155357"/>
<ellipse cx="354.50" cy="234.55" rx="209.62" ry="174.48" transform="rotate(-3.059 354.50 234.55)" fill="#155357"/>
<ellipse cx="354.50" cy="234.15" rx="208.13" ry="173.22" transform="rotate(-3.056 354.50 234.15)" fill="#155257"/>
<ellipse cx="354.51" cy="233.75" rx="206.65" ry="171.95" transform="rotate(-3.053 354.51 233.75)" fill="#145256"/>
<ellipse cx="354.52" cy="233.36" rx="205.16" ry="170.68" transform="rotate(-3.050 354.52 233.36)" fill="#145256"/>
<ellipse cx="354.52" cy="232.97" rx="203.68" ry="169.42" transform="rotate(-3.046 354.52 232.97)" fill="#145155"/>
<ellipse cx="354.53" cy="232.59" rx="202.20" ry="168.16" transform="rotate(-3.043 354.53 232.59)" fill="#145155"/>
<ellipse cx="354.53" cy="232.20" rx="200.72" ry="166.89" transform="rotate(-3.040 354.53 232.20)" fill="#145055"/>
<ellipse cx="354.54" cy="231.82" rx="199.24" ry="165.63" transform="rotate(-3.037 354.54 231.82)" fill="#145054"/>
<ellipse cx="354.55" cy="231.45" rx="197.75" ry="164.37" transform="rotate(-3.034 354.55 231.45)" fill="#144f54"/>
<ellipse cx="354.55" cy="231.07" rx="196.28" ry="163.12" transform="rotate(-3.031 354.55 231.07)" fill="#134f53"/>
<ellipse cx="354.56" cy="230.70" rx="194.80" ry="161.86" transform="rotate(-3.028 354.56 230.70)" fill="#134f53"/>
<ellipse cx="354.56" cy="230.33" rx="193.32" ry="160.60" transform="rotate(-3.025 354.56 230.33)" fill="#134e52"/>
<ellipse cx="354.57" cy="229.97" rx="191.84" ry="159.35" transform="rotate(-3.022 354.57 229.97)" fill="#134e52"/>
<ellipse cx="354.57" cy="229.61" rx="190.36" ry="158.10" transform="rotate(-3.019 354.57 229.61)" fill="#134d51"/>
<ellipse cx="354.58" cy="229.25" rx="188.89" ry="156.84" transform="rotate(-3.016 354.58 229.25)" fill="#134d51"/>
<ellipse cx="354.58" cy="228.89" rx="187.41" ry="155.59" transform="rotate(-3.014 354.58 228.89)" fill="#134c51"/>
<ellipse cx="354.59" cy="228.54" rx="185.94" ry="154.35" transform="rotate(-3.011 354.59 228.54)" fill="#124c50"/>
<ellipse cx="354.60" cy="228.19" rx="184.46" ry="153.10" transform="rotate(-3.008 354.60 228.19)" fill="#124c50"/>
<ellipse cx="354.60" cy="227.84" rx="182.99" ry="151.85" transform="rotate(-3.005 354.60 227.84)" fill="#124b4f"/>
<ellipse cx="354.61" cy="227.50" rx="181.52" ry="150.60" transform="rotate(-3.002 354.61 227.50)" fill="#124b4f"/>
<ellipse cx="354.61" cy="227.16" rx="180.05" ry="149.36" transform="rotate(-3.000 354.61 227.16)" fill="#124a4e"/>
<ellipse cx="354.62" cy="226.82" rx="178.58" ry="148.12" transform="rotate(-2.997 354.62 226.82)" fill="#124a4e"/>
<ellipse cx="354.62" cy="226.49" rx="177.11" ry="146.87" transform="rotate(-2.994 354.62 226.49)" fill="#11494d"/>
<ellipse cx="354.63" cy="226.15" rx="175.64" ry="145.63" transform="rotate(-2.992 354.63 226.15)" fill="#11494d"/>
<ellipse cx="354.63" cy="225.82" rx="174.17" ry="144.39" transform="rotate(-2.989 354.63 225.82)" fill="#11484c"/>
<ellipse cx="354.64" cy="225.50" rx="172.70" ry="143.16" transform="rotate(-2.987 354.64 225.50)" fill="#11484c"/>
<ellipse cx="354.64" cy="225.17" rx="171.23" ry="141.92" transform="rotate(-2.984 354.64 225.17)" fill="#11484b"/>
<ellipse cx="354.65" cy="224.85" rx="169.77" ry="140.68" transform="rotate(-2.981 354.65 224.85)" fill="#11474b"/>
<ellipse cx="354.65" cy="224.54" rx="168.30" ry="139.45" transform="rotate(-2.979 354.65 224.54)" fill="#10474a"/>
<ellipse cx="354.66" cy="224.22" rx="166.83" ry="138.21" transform="rotate(-2.977 354.66 224.22)" fill="#10464a"/>
<ellipse cx="354.66" cy="223.91" rx="165.37" ry="136.98" transform="rotate(-2.974 354.66 223.91)" fill="#104649"/>
<ellipse cx="354.67" cy="223.60" rx="163.91" ry="135.75" transform="rotate(-2.972 354.67 223.60)" fill="#104549"/>
<ellipse cx="354.67" cy="223.29" rx="162.44" ry="134.51" transform="rotate(-2.969 354.67 223.29)" fill="#104548"/>
<ellipse cx="354.67" cy="222.99" rx="160.98" ry="133.28" transform="rotate(-2.967 354.67 222.99)" fill="#104448"/>
<ellipse cx="354.68" cy="222.69" rx="159.52" ry="132.05" transform="rotate(-2.965 354.68 222.69)" fill="#0f4447"/>
<ellipse cx="354.68" cy="222.39" rx="158.06" ry="130.83" transform="rotate(-2.962 354.68 222.39)" fill="#0f4347"/>
<ellipse cx="354.69" cy="222.10" rx="156.59" ry="129.60" transform="rotate(-2.960 354.69 222.10)" fill="#0f4346"/>
<ellipse cx="354.69" cy="221.81" rx="155.13" ry="128.37" transform="rotate(-2.958 354.69 221.81)" fill="#0f4246"/>
<ellipse cx="354.70" cy="221.52" rx="153.67" ry="127.15" transform="rotate(-2.955 354.70 221.52)" fill="#0f4245"/>
<ellipse cx="354.70" cy="221.23" rx="152.21" ry="125.92" transform="rotate(-2.953 354.70 221.23)" fill="#0e4145"/>
<ellipse cx="354.71" cy="220.95" rx="150.76" ry="124.70" transform="rotate(-2.951 354.71 220.95)" fill="#0e4144"/>
<ellipse cx="354.71" cy="220.67" rx="149.30" ry="123.48" transform="rotate(-2.949 354.71 220.67)" fill="#0e4043"/>
<ellipse cx="354.71" cy="220.39" rx="147.84" ry="122.26" transform="rotate(-2.947 354.71 220.39)" fill="#0e3f43"/>
<ellipse cx="354.72" cy="220.11" rx="146.38" ry="121.04" transform="rotate(-2.945 354.72 220.11)" fill="#0e3f42"/>
<ellipse cx="354.72" cy="219.84" rx="144.93" ry="119.82" transform="rotate(-2.942 354.72 219.84)" fill="#0d3e42"/>
<ellipse cx="354.73" cy="219.57" rx="143.47" ry="118.60" transform="rotate(-2.940 354.73 219.57)" fill="#0d3e41"/>
<ellipse cx="354.73" cy="219.31" rx="142.02" ry="117.38" transform="rotate(-2.938 354.73 219.31)" fill="#0d3d41"/>
<ellipse cx="354.74" cy="219.04" rx="140.56" ry="116.16" transform="rotate(-2.936 354.74 219.04)" fill="#0d3d40"/>
<ellipse cx="354.74" cy="218.78" rx="139.11" ry="114.95" transform="rotate(-2.934 354.74 218.78)" fill="#0d3c3f"/>
<ellipse cx="354.74" cy="218.53" rx="137.65" ry="113.73" transform="rotate(-2.932 354.74 218.53)" fill="#0c3b3f"/>
<ellipse cx="354.75" cy="218.27" rx="136.20" ry="112.52" transform="rotate(-2.930 354.75 218.27)" fill="#0c3b3e"/>
<ellipse cx="354.75" cy="218.02" rx="134.75" ry="111.31" transform="rotate(-2.928 354.75 218.02)" fill="#0c3a3e"/>
<ellipse cx="354.75" cy="217.77" rx="133.29" ry="110.09" transform="rotate(-2.927 354.75 217.77)" fill="#0c3a3d"/>
<ellipse cx="354.76" cy="217.52" rx="131.84" ry="108.88" transform="rotate(-2.925 354.76 217.52)" fill="#0c393c"/>
<ellipse cx="354.76" cy="217.28" rx="130.39" ry="107.67" transform="rotate(-2.923 354.76 217.28)" fill="#0b383c"/>
<ellipse cx="354.77" cy="217.04" rx="128.94" ry="106.46" transform="rotate(-2.921 354.77 217.04)" fill="#0b383b"/>
<ellipse cx="354.77" cy="216.80" rx="127.49" ry="105.25" transform="rotate(-2.919 354.77 216.80)" fill="#0b373a"/>
<ellipse cx="354.77" cy="216.56" rx="126.04" ry="104.05" transform="rotate(-2.917 354.77 216.56)" fill="#0b373a"/>
<ellipse cx="354.78" cy="216.33" rx="124.59" ry="102.84" transform="rotate(-2.916 354.78 216.33)" fill="#0a3639"/>
<ellipse cx="354.78" cy="216.10" rx="123.14" ry="101.63" transform="rotate(-2.914 354.78 216.10)" fill="#0a3538"/>
<ellipse cx="354.78" cy="215.87" rx="121.70" ry="100.43" transform="rotate(-2.912 354.78 215.87)" fill="#0a3538"/>
<ellipse cx="354.79" cy="215.65" rx="120.25" ry="99.22" transform="rotate(-2.910 354.79 215.65)" fill="#0a3437"/>
<ellipse cx="354.79" cy="215.43" rx="118.80" ry="98.02" transform="rotate(-2.909 354.79 215.43)" fill="#093336"/>
<ellipse cx="354.79" cy="215.21" rx="117.35" ry="96.81" transform="rotate(-2.907 354.79 215.21)" fill="#093335"/>
<ellipse cx="354.80" cy="214.99" rx="115.91" ry="95.61" transform="rotate(-2.905 354.80 214.99)" fill="#093235"/>
<ellipse cx="354.80" cy="214.78" rx="114.46" ry="94.41" transform="rotate(-2.904 354.80 214.78)" fill="#093134"/>
<ellipse cx="354.80" cy="214.57" rx="113.02" ry="93.21" transform="rotate(-2.902 354.80 214.57)" fill="#083033"/>
<ellipse cx="354.81" cy="214.36" rx="111.57" ry="92.00" transform="rotate(-2.901 354.81 214.36)" fill="#083032"/>
<ellipse cx="354.81" cy="214.15" rx="110.13" ry="90.80" transform="rotate(-2.899 354.81 214.15)" fill="#082f32"/>
<ellipse cx="354.81" cy="213.95" rx="108.68" ry="89.60" transform="rotate(-2.898 354.81 213.95)" fill="#082e31"/>
<ellipse cx="354.82" cy="213.75" rx="107.24" ry="88.41" transform="rotate(-2.896 354.82 213.75)" fill="#082d30"/>
<ellipse cx="354.82" cy="213.55" rx="105.79" ry="87.21" transform="rotate(-2.895 354.82 213.55)" fill="#072d2f"/>
<ellipse cx="354.82" cy="213.36" rx="104.35" ry="86.01" transform="rotate(-2.893 354.82 213.36)" fill="#072c2e"/>
<ellipse cx="354.83" cy="213.17" rx="102.91" ry="84.81" transform="rotate(-2.892 354.83 213.17)" fill="#072b2e"/>
<ellipse cx="354.83" cy="212.98" rx="101.47" ry="83.62" transform="rotate(-2.890 354.83 212.98)" fill="#072a2d"/>
<ellipse cx="354.83" cy="212.79" rx="100.02" ry="82.42" transform="rotate(-2.889 354.83 212.79)" fill="#06292c"/>
<ellipse cx="354.83" cy="212.61" rx="98.58" ry="81.23" transform="rotate(-2.887 354.83 212.61)" fill="#06282b"/>
<ellipse cx="354.84" cy="212.43" rx="97.14" ry="80.03" transform="rotate(-2.886 354.84 212.43)" fill="#06272a"/>
<ellipse cx="354.84" cy="212.25" rx="95.70" ry="78.84" transform="rotate(-2.885 354.84 212.25)" fill="#062729"/>
<ellipse cx="354.84" cy="212.07" rx="94.26" ry="77.65" transform="rotate(-2.883 354.84 212.07)" fill="#052628"/>
<ellipse cx="354.84" cy="211.90" rx="92.82" ry="76.45" transform="rotate(-2.882 354.84 211.90)" fill="#052527"/>
<ellipse cx="354.85" cy="211.73" rx="91.38" ry="75.26" transform="rotate(-2.881 354.85 211.73)" fill="#052426"/>
<ellipse cx="354.85" cy="211.56" rx="89.94" ry="74.07" transform="rotate(-2.880 354.85 211.56)" fill="#052325"/>
<ellipse cx="354.85" cy="211.40" rx="88.50" ry="72.88" transform="rotate(-2.878 354.85 211.40)" fill="#042224"/>
<ellipse cx="354.85" cy="211.24" rx="87.06" ry="71.69" transform="rotate(-2.877 354.85 211.24)" fill="#042023"/>
<ellipse cx="354.86" cy="211.08" rx="85.62" ry="70.50" transform="rotate(-2.876 354.86 211.08)" fill="#041f21"/>
<ellipse cx="354.86" cy="210.92" rx="84.19" ry="69.31" transform="rotate(-2.875 354.86 210.92)" fill="#041e20"/>
<ellipse cx="354.86" cy="210.77" rx="82.75" ry="68.12" transform="rotate(-2.874 354.86 210.77)" fill="#031d1f"/>
<ellipse cx="354.86" cy="210.62" rx="81.31" ry="66.93" transform="rotate(-2.873 354.86 210.62)" fill="#031c1e"/>
<ellipse cx="354.87" cy="210.47" rx="79.87" ry="65.75" transform="rotate(-2.871 354.87 210.47)" fill="#031a1c"/>
<ellipse cx="354.87" cy="210.32" rx="78.44" ry="64.56" transform="rotate(-2.870 354.87 210.32)" fill="#03191b"/>
<ellipse cx="354.87" cy="210.18" rx="77.00" ry="63.37" transform="rotate(-2.869 354.87 210.18)" fill="#031819"/>
<ellipse cx="354.87" cy="210.04" rx="75.56" ry="62.19" transform="rotate(-2.868 354.87 210.04)" fill="#021618"/>
<ellipse cx="354.88" cy="209.90" rx="74.13" ry="61.00" transform="rotate(-2.867 354.88 209.90)" fill="#021416"/>
<ellipse cx="354.88" cy="209.77" rx="72.69" ry="59.82" transform="rotate(-2.866 354.88 209.77)" fill="#021314"/>
<ellipse cx="354.88" cy="209.63" rx="71.26" ry="58.63" transform="rotate(-2.865 354.88 209.63)" fill="#021112"/>
<ellipse cx="354.88" cy="209.50" rx="69.82" ry="57.45" transform="rotate(-2.864 354.88 209.50)" fill="#010f10"/>
<ellipse cx="354.88" cy="209.38" rx="68.39" ry="56.26" transform="rotate(-2.863 354.88 209.38)" fill="#010c0e"/>
<ellipse cx="354.89" cy="209.25" rx="66.95" ry="55.08" transform="rotate(-2.862 354.89 209.25)" fill="#010a0b"/>
<ellipse cx="354.89" cy="209.13" rx="65.52" ry="53.90" transform="rotate(-2.862 354.89 209.13)" fill="#010708"/>
<ellipse cx="354.89" cy="209.01" rx="64.08" ry="52.71" transform="rotate(-2.861 354.89 209.01)" fill="#000405"/>
<ellipse cx="354.89" cy="208.89" rx="62.65" ry="51.53" transform="rotate(-2.860 354.89 208.89)" fill="#000102"/></g>
<g clip-path="url(#ce)" style="mix-blend-mode:screen;mix-blend-mode:plus-lighter" fill="none" stroke-width="1" shape-rendering="crispEdges">
<use href="#pa0" stroke="#18321a"/><use href="#pb0" stroke="#1c3a1e"/><use href="#pa1" stroke="#2a5a2c"/><use href="#pb1" stroke="#306432"/>
</g>
</svg>
<div id="panel">
  <div class="hdrbg"></div>
  <div class="sep" style="top:98px"></div><div class="sep" style="top:99px;background:#404040"></div>
  <div class="sep" style="top:153px"></div>

  <!-- top rows -->
  <div class="lbl" style="top:-4px">Convex</div>
  <div class="lbl dim" style="top:16px;left:34px">Is Trigger</div>
  <div class="lbl" style="top:36px">Cooking Options</div>
  <div class="lbl" style="top:56px">Material</div>
  <div class="lbl" style="top:76px">Mesh</div>

  <div class="chk" style="top:-4px"></div>
  <div class="chk dis" style="top:16px"></div>

  <div class="dd" style="left:140px;top:34px;width:150px;height:18px"><span>Mixed...</span><i class="arr"></i></div>

  <div class="obj" style="top:54px"><span>None (Physic Material)</span><b class="pick"><svg width="11" height="11" viewBox="0 0 11 11"><circle cx="5.5" cy="5.5" r="4.5" fill="none" stroke="#c8c8c8" stroke-width="1"/><circle cx="5.5" cy="5.5" r="1.8" fill="#c8c8c8"/></svg></b></div>
  <div class="obj" style="top:74px"><svg class="mesh" width="10" height="10" viewBox="0 0 10 10"><rect x="0.5" y="0.5" width="9" height="9" fill="#212c34"/><path d="M0.5 0.3V9.7M2.8 0.3V9.7M5.1 0.3V9.7M7.4 0.3V9.7M9.6 0.3V9.7M0.3 0.5H9.7M0.3 2.8H9.7M0.3 5.1H9.7M0.3 7.4H9.7M0.3 9.6H9.7" stroke="#4d9bd0" stroke-width="0.42" fill="none"/></svg><span style="left:15px">Plane</span><b class="pick"><svg width="11" height="11" viewBox="0 0 11 11"><circle cx="5.5" cy="5.5" r="4.5" fill="none" stroke="#c8c8c8" stroke-width="1"/><circle cx="5.5" cy="5.5" r="1.8" fill="#c8c8c8"/></svg></b></div>

  <!-- material header -->
  <div class="thumb"><div></div></div>
  <svg class="fold" width="9" height="8" viewBox="0 0 9 8"><path d="M0.2 0.4H8.8L4.5 7.9Z" fill="#707070"/></svg>
  <div class="title">m_pingscan-tex_screenshot</div>
  <div class="lbl" style="left:53px;top:129px">Shader</div>
  <div class="dd" style="left:104px;top:127px;width:186px;height:18px"><span>Shader Graphs/s_pingscan-br</span><i class="arr" style="right:4.5px"></i></div>

  <!-- header icons -->
  <svg class="ico" style="left:248px;top:107px" width="11" height="11" viewBox="0 0 11 11"><circle cx="5.5" cy="5.5" r="5.4" fill="#c4c4c4"/><text x="5.5" y="9" font-family="Liberation Sans, sans-serif" font-weight="bold" font-size="9.5" text-anchor="middle" fill="#3c3c3c">?</text></svg>
  <svg class="ico" style="left:264.6px;top:106.5px" width="11" height="11" viewBox="0 0 11 11"><path d="M0.2 3H5.4M8.5 3H10.6M0.2 8H2.4M5.4 8H10.6" stroke="#c4c4c4" stroke-width="1.2" fill="none"/><path d="M7.4 0.4V5.6M4.3 5.4V10.6" stroke="#c4c4c4" stroke-width="2.2" fill="none"/></svg>
  <svg class="ico" style="left:280.8px;top:106.8px" width="10.4" height="10.4" viewBox="0 0 12 12"><g fill="#c4c4c4"><circle cx="6" cy="6" r="4.1"/><rect x="4.9" y="0.2" width="2.2" height="11.6" rx="0.5"/><rect x="4.9" y="0.2" width="2.2" height="11.6" rx="0.5" transform="rotate(60 6 6)"/><rect x="4.9" y="0.2" width="2.2" height="11.6" rx="0.5" transform="rotate(120 6 6)"/></g><circle cx="6" cy="6" r="1.9" fill="#3c3c3c"/></svg>

  <!-- properties -->
  <div class="lbl" style="top:163px">baseTex</div>
  <div class="tex">
    <svg width="58" height="58" viewBox="0 0 58 58">
<defs><filter id="bl" x="-5%" y="-5%" width="110%" height="110%"><feGaussianBlur stdDeviation="0.7"/></filter><filter id="bs" x="-5%" y="-5%" width="110%" height="110%"><feGaussianBlur stdDeviation="0.35"/></filter><clipPath id="cp"><rect width="58" height="58"/></clipPath></defs>
<g clip-path="url(#cp)">
<rect x="0" y="0" width="58" height="58" fill="#6f6f6f"/>
<g filter="url(#bs)">
<rect x="0" y="0" width="14.2" height="14.2" fill="#5b3d2f"/>
<rect x="0" y="5" width="14.2" height="1" fill="#553829"/>
<rect x="0" y="10" width="14.2" height="1" fill="#553829"/>
<rect x="14.2" y="0" width="14.8" height="14.2" fill="#777777"/>
<rect x="17.9" y="-0.3" width="3.7" height="3.7" fill="#505050"/>
<rect x="25.3" y="-0.3" width="3.7" height="3.7" fill="#505050"/>
<rect x="14.2" y="3.4" width="3.7" height="3.7" fill="#505050"/>
<rect x="21.6" y="3.4" width="3.7" height="3.7" fill="#505050"/>
<rect x="17.9" y="7.1" width="3.7" height="3.7" fill="#505050"/>
<rect x="25.3" y="7.1" width="3.7" height="3.7" fill="#505050"/>
<rect x="14.2" y="10.8" width="3.7" height="3.7" fill="#505050"/>
<rect x="21.6" y="10.8" width="3.7" height="3.7" fill="#505050"/>
<rect x="29" y="0" width="14.3" height="14.2" fill="#4a4a4a"/>
<rect x="0" y="14.2" width="14.6" height="14.4" fill="#b39a7a"/>
<rect x="3.2" y="14.2" width="0.8" height="14.4" fill="#a38a6b"/>
<rect x="7.4" y="14.2" width="0.8" height="14.4" fill="#a38a6b"/>
<rect x="11.7" y="14.2" width="0.8" height="14.4" fill="#a38a6b"/>
<rect x="14.6" y="14.2" width="14.4" height="14.4" fill="#40445a"/>
</g>
<g filter="url(#bl)">
<rect x="0" y="28.6" width="29" height="29.4" fill="#9b968c"/>
<rect x="0" y="28.8" width="3.2" height="7.6" fill="#4648a0"/>
<rect x="3.2" y="28.8" width="3" height="7.6" fill="#8a4c9c"/>
<rect x="6.2" y="28.8" width="4.8" height="7.6" fill="#c2593a"/>
<rect x="11" y="28.8" width="3.2" height="7.6" fill="#c8a23a"/>
<rect x="14.2" y="28.8" width="3.8" height="7.6" fill="#5c9a4a"/>
<rect x="18" y="28.8" width="3" height="7.6" fill="#4a8c9c"/>
<rect x="21" y="28.8" width="2.6" height="7.6" fill="#8fa4b4"/>
<rect x="23.6" y="28.8" width="5.6" height="7.6" fill="#4a3024"/>
<rect x="0" y="36.4" width="4.5" height="8" fill="#a08a6c"/>
<rect x="4.5" y="36.4" width="3" height="9" fill="#8a8078"/>
<rect x="7.5" y="36.4" width="4.5" height="10" fill="#7ea05c"/>
<rect x="12" y="36.4" width="4" height="6" fill="#b8b4ac"/>
<rect x="16" y="36.4" width="5" height="5" fill="#c8c8c4"/>
<rect x="21" y="36.4" width="8" height="6" fill="#a8a49c"/>
<rect x="0" y="44.4" width="5" height="7" fill="#c0a890"/>
<rect x="5" y="45" width="4" height="7" fill="#9c9488"/>
<rect x="9" y="46" width="5" height="6" fill="#6f8a5c"/>
<rect x="14" y="42" width="5" height="8" fill="#8a8a86"/>
<rect x="19" y="42" width="5" height="7" fill="#b4b8bc"/>
<rect x="24" y="42" width="5" height="8" fill="#8c8478"/>
<rect x="0" y="51" width="6" height="7" fill="#a09098"/>
<rect x="6" y="52" width="6" height="6" fill="#c8b8a8"/>
<rect x="12" y="50" width="6" height="8" fill="#b0a8a0"/>
<rect x="18" y="49" width="6" height="9" fill="#c4c8cc"/>
<rect x="24" y="50" width="5" height="8" fill="#8890a0"/>
<rect x="29" y="28.6" width="22.3" height="19.4" fill="#8e8e90"/>
<rect x="29" y="28.8" width="5" height="8" fill="#c9a03a"/>
<rect x="34" y="28.8" width="3.4" height="8" fill="#a08c6c"/>
<rect x="37.4" y="28.8" width="3.4" height="8" fill="#b49c74"/>
<rect x="40.8" y="28.8" width="8" height="5.6" fill="#d8dde0"/>
<rect x="40.8" y="34.2" width="8" height="2.6" fill="#4c4c68"/>
<rect x="29" y="36.6" width="5" height="8.6" fill="#8c2a26"/>
<rect x="34" y="36.6" width="7" height="2.6" fill="#b4aca0"/>
<rect x="34" y="39" width="7" height="7" fill="#e0cfa6"/>
<rect x="35.4" y="41" width="4" height="2" fill="#d89a4a"/>
<rect x="41" y="36.6" width="10.3" height="9.6" fill="#9a98a2"/>
<rect x="29" y="45.4" width="22.3" height="2.4" fill="#c4c0c0"/>
</g>
<rect x="51.3" y="28.6" width="6.7" height="29.4" fill="#8c8c8c"/>
<rect x="29" y="48" width="29" height="10" fill="#8a8a8a"/>
</g>
</svg>
    <div class="sel">Select</div>
  </div>

  <div class="lbl" style="top:235px">baseColor</div>
  <div class="col bc" style="top:233px"><div class="sw" style="background:#3a3a3a"></div><div class="al"></div><div class="eye"><svg width="11" height="11" viewBox="0 0 11 11"><path d="M0.2 10.8L0.9 8.6L6.2 3.3L7.7 4.8L2.4 10.1Z" fill="#c4c4c4"/><path d="M5.2 1.9L9.1 5.8" stroke="#c4c4c4" stroke-width="1.5"/><path d="M7.6 3.4L9.3 1.7" stroke="#c4c4c4" stroke-width="2.8" stroke-linecap="round"/></svg></div></div>

  <div class="hl"></div>
  <div class="lbl hlt" style="top:255px">ringSize</div>
  <div class="lbl hlt" style="top:275px">ringBorderWidth</div>
  <div class="fld hlf" style="left:225px;top:253px;width:65px"><span style="letter-spacing:-0.6px">1.55</span></div>
  <div class="fld hlf" style="left:225px;top:273px;width:65px"><span style="letter-spacing:-0.5px">0.17</span></div>

  <div class="lbl" style="top:295px">ringDistance</div>
  <div class="fld" style="left:225px;top:293px;width:65px;z-index:0"><span>2</span></div>

  <div class="lbl" style="top:315px">srcPosition</div>
  <div class="lbl" style="top:335px;left:34px">X</div>
  <div class="fld" style="left:45px;top:333px;width:49px"><span style="letter-spacing:-0.5px">1.8</span></div>
  <div class="lbl" style="top:335px;left:99px">Y</div>
  <div class="fld" style="left:110px;top:333px;width:49px"><span>0</span></div>
  <div class="lbl" style="top:335px;left:164px">Z</div>
  <div class="fld" style="left:175px;top:333px;width:49px"><span style="letter-spacing:0.4px">-5.47</span></div>
  <div class="lbl" style="top:335px;left:230px">W</div>
  <div class="fld" style="left:244px;top:333px;width:46px"><span>1</span></div>

  <div class="lbl" style="top:353px">ringColor</div>
  <div class="col" style="top:352px"><div class="sw" style="background:#39b6c5"></div><div class="al"></div><div class="eye"><svg width="11" height="11" viewBox="0 0 11 11"><path d="M0.2 10.8L0.9 8.6L6.2 3.3L7.7 4.8L2.4 10.1Z" fill="#c4c4c4"/><path d="M5.2 1.9L9.1 5.8" stroke="#c4c4c4" stroke-width="1.5"/><path d="M7.6 3.4L9.3 1.7" stroke="#c4c4c4" stroke-width="2.8" stroke-linecap="round"/></svg></div></div>
</div>

</body></html>
